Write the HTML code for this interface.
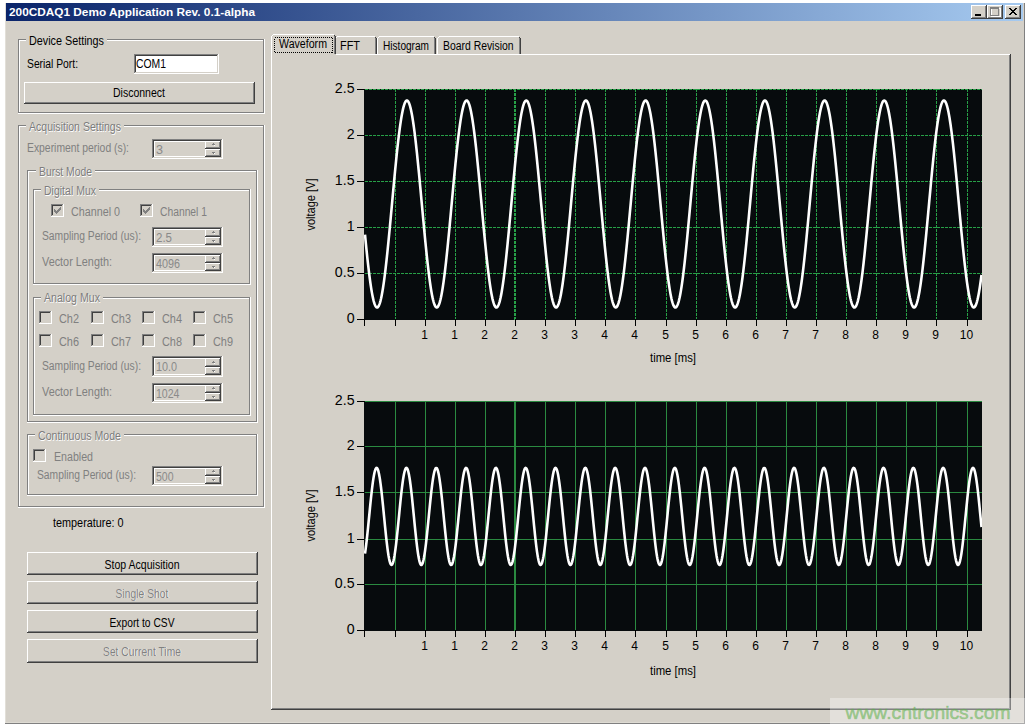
<!DOCTYPE html>
<html><head><meta charset="utf-8"><style>
html,body{margin:0;padding:0;background:#fff;width:1030px;height:728px;overflow:hidden}
svg{display:block}
text{font-family:"Liberation Sans",sans-serif}
</style></head><body>
<svg width="1030" height="728" viewBox="0 0 1030 728" shape-rendering="crispEdges">
<rect x="0" y="0" width="1030" height="728" fill="#fff"/>
<rect x="5" y="3" width="1020" height="721" fill="#d4d0c8"/>
<rect x="5" y="3" width="1" height="720" fill="#e2dfd8"/>
<rect x="6" y="722" width="1018" height="1" fill="#dedbd3"/>
<rect x="1024" y="3" width="1" height="721" fill="#808080"/>
<rect x="5" y="723" width="1020" height="1" fill="#808080"/>
<defs><linearGradient id="tg" x1="0" x2="1" y1="0" y2="0"><stop offset="0" stop-color="#0a246a"/><stop offset="1" stop-color="#a6caf0"/></linearGradient></defs>
<rect x="6" y="3" width="1017" height="18" fill="url(#tg)"/>
<text x="9" y="16" font-size="11" fill="#fff" font-weight="bold" text-anchor="start" textLength="246" lengthAdjust="spacingAndGlyphs">200CDAQ1 Demo Application Rev. 0.1-alpha</text>
<rect x="971" y="5" width="16" height="14" fill="#d4d0c8"/>
<rect x="971" y="5" width="15" height="1" fill="#ffffff"/>
<rect x="971" y="5" width="1" height="13" fill="#ffffff"/>
<rect x="971" y="18" width="16" height="1" fill="#404040"/>
<rect x="986" y="5" width="1" height="14" fill="#404040"/>
<rect x="972" y="17" width="14" height="1" fill="#808080"/>
<rect x="985" y="6" width="1" height="12" fill="#808080"/>
<rect x="987" y="5" width="16" height="14" fill="#d4d0c8"/>
<rect x="987" y="5" width="15" height="1" fill="#ffffff"/>
<rect x="987" y="5" width="1" height="13" fill="#ffffff"/>
<rect x="987" y="18" width="16" height="1" fill="#404040"/>
<rect x="1002" y="5" width="1" height="14" fill="#404040"/>
<rect x="988" y="17" width="14" height="1" fill="#808080"/>
<rect x="1001" y="6" width="1" height="12" fill="#808080"/>
<rect x="1005" y="5" width="16" height="14" fill="#d4d0c8"/>
<rect x="1005" y="5" width="15" height="1" fill="#ffffff"/>
<rect x="1005" y="5" width="1" height="13" fill="#ffffff"/>
<rect x="1005" y="18" width="16" height="1" fill="#404040"/>
<rect x="1020" y="5" width="1" height="14" fill="#404040"/>
<rect x="1006" y="17" width="14" height="1" fill="#808080"/>
<rect x="1019" y="6" width="1" height="12" fill="#808080"/>
<rect x="975" y="14" width="6" height="2" fill="#000"/>
<rect x="991.5" y="8.5" width="9" height="8" fill="none" stroke="#fff" stroke-width="1"/>
<rect x="990" y="7" width="9" height="2" fill="#808080"/>
<rect x="990" y="7" width="1" height="9" fill="#808080"/>
<rect x="998" y="7" width="1" height="9" fill="#808080"/>
<rect x="990" y="15" width="9" height="1" fill="#808080"/>
<rect x="1009" y="8" width="1" height="1" fill="#000"/>
<rect x="1010" y="8" width="1" height="1" fill="#000"/>
<rect x="1015" y="8" width="1" height="1" fill="#000"/>
<rect x="1016" y="8" width="1" height="1" fill="#000"/>
<rect x="1010" y="9" width="1" height="1" fill="#000"/>
<rect x="1011" y="9" width="1" height="1" fill="#000"/>
<rect x="1014" y="9" width="1" height="1" fill="#000"/>
<rect x="1015" y="9" width="1" height="1" fill="#000"/>
<rect x="1011" y="10" width="1" height="1" fill="#000"/>
<rect x="1012" y="10" width="1" height="1" fill="#000"/>
<rect x="1013" y="10" width="1" height="1" fill="#000"/>
<rect x="1014" y="10" width="1" height="1" fill="#000"/>
<rect x="1012" y="11" width="1" height="1" fill="#000"/>
<rect x="1013" y="11" width="1" height="1" fill="#000"/>
<rect x="1011" y="12" width="1" height="1" fill="#000"/>
<rect x="1012" y="12" width="1" height="1" fill="#000"/>
<rect x="1013" y="12" width="1" height="1" fill="#000"/>
<rect x="1014" y="12" width="1" height="1" fill="#000"/>
<rect x="1010" y="13" width="1" height="1" fill="#000"/>
<rect x="1011" y="13" width="1" height="1" fill="#000"/>
<rect x="1014" y="13" width="1" height="1" fill="#000"/>
<rect x="1015" y="13" width="1" height="1" fill="#000"/>
<rect x="1009" y="14" width="1" height="1" fill="#000"/>
<rect x="1010" y="14" width="1" height="1" fill="#000"/>
<rect x="1015" y="14" width="1" height="1" fill="#000"/>
<rect x="1016" y="14" width="1" height="1" fill="#000"/>
<rect x="18" y="39" width="246" height="1" fill="#808080"/>
<rect x="18" y="39" width="1" height="74" fill="#808080"/>
<rect x="263" y="39" width="1" height="74" fill="#808080"/>
<rect x="18" y="112" width="246" height="1" fill="#808080"/>
<rect x="19" y="40" width="244" height="1" fill="#ffffff"/>
<rect x="19" y="40" width="1" height="72" fill="#ffffff"/>
<rect x="264" y="39" width="1" height="75" fill="#ffffff"/>
<rect x="18" y="113" width="247" height="1" fill="#ffffff"/>
<rect x="26" y="38" width="81" height="4" fill="#d4d0c8"/>
<text x="29" y="45" font-size="12" fill="#000" font-weight="normal" text-anchor="start" textLength="75" lengthAdjust="spacingAndGlyphs">Device Settings</text>
<text x="27" y="68" font-size="12" fill="#000" font-weight="normal" text-anchor="start" textLength="51" lengthAdjust="spacingAndGlyphs">Serial Port:</text>
<rect x="134" y="54" width="85" height="20" fill="#fff"/>
<rect x="134" y="54" width="84" height="1" fill="#808080"/>
<rect x="134" y="54" width="1" height="19" fill="#808080"/>
<rect x="134" y="73" width="85" height="1" fill="#ffffff"/>
<rect x="218" y="54" width="1" height="20" fill="#ffffff"/>
<rect x="135" y="55" width="82" height="1" fill="#404040"/>
<rect x="135" y="55" width="1" height="17" fill="#404040"/>
<rect x="135" y="72" width="83" height="1" fill="#d4d0c8"/>
<rect x="217" y="55" width="1" height="18" fill="#d4d0c8"/>
<text x="136" y="68" font-size="12" fill="#000" font-weight="normal" text-anchor="start" textLength="30" lengthAdjust="spacingAndGlyphs">COM1</text>
<rect x="24" y="82" width="231" height="22" fill="#d4d0c8"/>
<rect x="24" y="82" width="230" height="1" fill="#ffffff"/>
<rect x="24" y="82" width="1" height="21" fill="#ffffff"/>
<rect x="24" y="103" width="231" height="1" fill="#404040"/>
<rect x="254" y="82" width="1" height="22" fill="#404040"/>
<rect x="25" y="102" width="229" height="1" fill="#808080"/>
<rect x="253" y="83" width="1" height="20" fill="#808080"/>
<text x="113" y="97" font-size="12" fill="#000" font-weight="normal" text-anchor="start" textLength="52" lengthAdjust="spacingAndGlyphs">Disconnect</text>
<rect x="18" y="125" width="246" height="1" fill="#808080"/>
<rect x="18" y="125" width="1" height="382" fill="#808080"/>
<rect x="263" y="125" width="1" height="382" fill="#808080"/>
<rect x="18" y="506" width="246" height="1" fill="#808080"/>
<rect x="19" y="126" width="244" height="1" fill="#ffffff"/>
<rect x="19" y="126" width="1" height="380" fill="#ffffff"/>
<rect x="264" y="125" width="1" height="383" fill="#ffffff"/>
<rect x="18" y="507" width="247" height="1" fill="#ffffff"/>
<rect x="26" y="124" width="98" height="4" fill="#d4d0c8"/>
<text x="29.6" y="131.6" font-size="12" fill="#fff" font-weight="normal" text-anchor="start" textLength="92" lengthAdjust="spacingAndGlyphs">Acquisition Settings</text>
<text x="29" y="131" font-size="12" fill="#7c7c7c" font-weight="normal" text-anchor="start" textLength="92" lengthAdjust="spacingAndGlyphs">Acquisition Settings</text>
<text x="27" y="152" font-size="12" fill="#808080" font-weight="normal" text-anchor="start" textLength="102" lengthAdjust="spacingAndGlyphs">Experiment period (s):</text>
<rect x="152" y="139" width="71" height="20" fill="#d4d0c8"/>
<rect x="152" y="139" width="70" height="1" fill="#808080"/>
<rect x="152" y="139" width="1" height="19" fill="#808080"/>
<rect x="152" y="158" width="71" height="1" fill="#ffffff"/>
<rect x="222" y="139" width="1" height="20" fill="#ffffff"/>
<rect x="153" y="140" width="68" height="1" fill="#404040"/>
<rect x="153" y="140" width="1" height="17" fill="#404040"/>
<rect x="153" y="157" width="69" height="1" fill="#d4d0c8"/>
<rect x="221" y="140" width="1" height="18" fill="#d4d0c8"/>
<rect x="154" y="141" width="67" height="16" fill="#ffffff"/>
<rect x="155" y="142" width="66" height="14" fill="#d4d0c8"/>
<rect x="205" y="141" width="16" height="8" fill="#d4d0c8"/>
<rect x="205" y="141" width="15" height="1" fill="#ffffff"/>
<rect x="205" y="141" width="1" height="7" fill="#ffffff"/>
<rect x="205" y="148" width="16" height="1" fill="#404040"/>
<rect x="220" y="141" width="1" height="8" fill="#404040"/>
<rect x="206" y="147" width="14" height="1" fill="#808080"/>
<rect x="219" y="142" width="1" height="6" fill="#808080"/>
<rect x="205" y="149" width="16" height="8" fill="#d4d0c8"/>
<rect x="205" y="149" width="15" height="1" fill="#ffffff"/>
<rect x="205" y="149" width="1" height="7" fill="#ffffff"/>
<rect x="205" y="156" width="16" height="1" fill="#404040"/>
<rect x="220" y="149" width="1" height="8" fill="#404040"/>
<rect x="206" y="155" width="14" height="1" fill="#808080"/>
<rect x="219" y="150" width="1" height="6" fill="#808080"/>
<rect x="213" y="143" width="1" height="1" fill="#808080"/>
<rect x="212" y="144" width="3" height="1" fill="#808080"/>
<rect x="214" y="145" width="1" height="1" fill="#ffffff"/>
<rect x="212" y="152" width="3" height="1" fill="#808080"/>
<rect x="213" y="153" width="1" height="1" fill="#808080"/>
<rect x="214" y="153" width="1" height="1" fill="#ffffff"/>
<text x="156" y="154" font-size="12" fill="#8a8a8a" font-weight="normal" text-anchor="start" textLength="7" lengthAdjust="spacingAndGlyphs">3</text>
<rect x="27" y="170" width="230" height="1" fill="#808080"/>
<rect x="27" y="170" width="1" height="252" fill="#808080"/>
<rect x="256" y="170" width="1" height="252" fill="#808080"/>
<rect x="27" y="421" width="230" height="1" fill="#808080"/>
<rect x="28" y="171" width="228" height="1" fill="#ffffff"/>
<rect x="28" y="171" width="1" height="250" fill="#ffffff"/>
<rect x="257" y="170" width="1" height="253" fill="#ffffff"/>
<rect x="27" y="422" width="231" height="1" fill="#ffffff"/>
<rect x="36" y="169" width="59" height="4" fill="#d4d0c8"/>
<text x="39.6" y="176.6" font-size="12" fill="#fff" font-weight="normal" text-anchor="start" textLength="53" lengthAdjust="spacingAndGlyphs">Burst Mode</text>
<text x="39" y="176" font-size="12" fill="#7c7c7c" font-weight="normal" text-anchor="start" textLength="53" lengthAdjust="spacingAndGlyphs">Burst Mode</text>
<rect x="33" y="189" width="217" height="1" fill="#808080"/>
<rect x="33" y="189" width="1" height="95" fill="#808080"/>
<rect x="249" y="189" width="1" height="95" fill="#808080"/>
<rect x="33" y="283" width="217" height="1" fill="#808080"/>
<rect x="34" y="190" width="215" height="1" fill="#ffffff"/>
<rect x="34" y="190" width="1" height="93" fill="#ffffff"/>
<rect x="250" y="189" width="1" height="96" fill="#ffffff"/>
<rect x="33" y="284" width="218" height="1" fill="#ffffff"/>
<rect x="41" y="188" width="58" height="4" fill="#d4d0c8"/>
<text x="44.6" y="195.6" font-size="12" fill="#fff" font-weight="normal" text-anchor="start" textLength="52" lengthAdjust="spacingAndGlyphs">Digital Mux</text>
<text x="44" y="195" font-size="12" fill="#7c7c7c" font-weight="normal" text-anchor="start" textLength="52" lengthAdjust="spacingAndGlyphs">Digital Mux</text>
<rect x="51" y="204" width="13" height="13" fill="#d4d0c8"/>
<rect x="51" y="204" width="12" height="1" fill="#808080"/>
<rect x="51" y="204" width="1" height="12" fill="#808080"/>
<rect x="51" y="216" width="13" height="1" fill="#ffffff"/>
<rect x="63" y="204" width="1" height="13" fill="#ffffff"/>
<rect x="52" y="205" width="10" height="1" fill="#404040"/>
<rect x="52" y="205" width="1" height="10" fill="#404040"/>
<rect x="52" y="215" width="11" height="1" fill="#d4d0c8"/>
<rect x="62" y="205" width="1" height="11" fill="#d4d0c8"/>
<rect x="54" y="209" width="1" height="3" fill="#808080"/>
<rect x="55" y="210" width="1" height="3" fill="#808080"/>
<rect x="56" y="211" width="1" height="3" fill="#808080"/>
<rect x="57" y="210" width="1" height="3" fill="#808080"/>
<rect x="58" y="209" width="1" height="3" fill="#808080"/>
<rect x="59" y="208" width="1" height="3" fill="#808080"/>
<rect x="60" y="207" width="1" height="3" fill="#808080"/>
<text x="71" y="216" font-size="12" fill="#808080" font-weight="normal" text-anchor="start" textLength="49" lengthAdjust="spacingAndGlyphs">Channel 0</text>
<rect x="140" y="204" width="13" height="13" fill="#d4d0c8"/>
<rect x="140" y="204" width="12" height="1" fill="#808080"/>
<rect x="140" y="204" width="1" height="12" fill="#808080"/>
<rect x="140" y="216" width="13" height="1" fill="#ffffff"/>
<rect x="152" y="204" width="1" height="13" fill="#ffffff"/>
<rect x="141" y="205" width="10" height="1" fill="#404040"/>
<rect x="141" y="205" width="1" height="10" fill="#404040"/>
<rect x="141" y="215" width="11" height="1" fill="#d4d0c8"/>
<rect x="151" y="205" width="1" height="11" fill="#d4d0c8"/>
<rect x="143" y="209" width="1" height="3" fill="#808080"/>
<rect x="144" y="210" width="1" height="3" fill="#808080"/>
<rect x="145" y="211" width="1" height="3" fill="#808080"/>
<rect x="146" y="210" width="1" height="3" fill="#808080"/>
<rect x="147" y="209" width="1" height="3" fill="#808080"/>
<rect x="148" y="208" width="1" height="3" fill="#808080"/>
<rect x="149" y="207" width="1" height="3" fill="#808080"/>
<text x="160" y="216" font-size="12" fill="#808080" font-weight="normal" text-anchor="start" textLength="47" lengthAdjust="spacingAndGlyphs">Channel 1</text>
<text x="42" y="240" font-size="12" fill="#808080" font-weight="normal" text-anchor="start" textLength="99" lengthAdjust="spacingAndGlyphs">Sampling Period (us):</text>
<rect x="152" y="227" width="71" height="20" fill="#d4d0c8"/>
<rect x="152" y="227" width="70" height="1" fill="#808080"/>
<rect x="152" y="227" width="1" height="19" fill="#808080"/>
<rect x="152" y="246" width="71" height="1" fill="#ffffff"/>
<rect x="222" y="227" width="1" height="20" fill="#ffffff"/>
<rect x="153" y="228" width="68" height="1" fill="#404040"/>
<rect x="153" y="228" width="1" height="17" fill="#404040"/>
<rect x="153" y="245" width="69" height="1" fill="#d4d0c8"/>
<rect x="221" y="228" width="1" height="18" fill="#d4d0c8"/>
<rect x="154" y="229" width="67" height="16" fill="#ffffff"/>
<rect x="155" y="230" width="66" height="14" fill="#d4d0c8"/>
<rect x="205" y="229" width="16" height="8" fill="#d4d0c8"/>
<rect x="205" y="229" width="15" height="1" fill="#ffffff"/>
<rect x="205" y="229" width="1" height="7" fill="#ffffff"/>
<rect x="205" y="236" width="16" height="1" fill="#404040"/>
<rect x="220" y="229" width="1" height="8" fill="#404040"/>
<rect x="206" y="235" width="14" height="1" fill="#808080"/>
<rect x="219" y="230" width="1" height="6" fill="#808080"/>
<rect x="205" y="237" width="16" height="8" fill="#d4d0c8"/>
<rect x="205" y="237" width="15" height="1" fill="#ffffff"/>
<rect x="205" y="237" width="1" height="7" fill="#ffffff"/>
<rect x="205" y="244" width="16" height="1" fill="#404040"/>
<rect x="220" y="237" width="1" height="8" fill="#404040"/>
<rect x="206" y="243" width="14" height="1" fill="#808080"/>
<rect x="219" y="238" width="1" height="6" fill="#808080"/>
<rect x="213" y="231" width="1" height="1" fill="#808080"/>
<rect x="212" y="232" width="3" height="1" fill="#808080"/>
<rect x="214" y="233" width="1" height="1" fill="#ffffff"/>
<rect x="212" y="240" width="3" height="1" fill="#808080"/>
<rect x="213" y="241" width="1" height="1" fill="#808080"/>
<rect x="214" y="241" width="1" height="1" fill="#ffffff"/>
<text x="156" y="242" font-size="12" fill="#8a8a8a" font-weight="normal" text-anchor="start" textLength="16" lengthAdjust="spacingAndGlyphs">2.5</text>
<text x="42" y="266" font-size="12" fill="#808080" font-weight="normal" text-anchor="start" textLength="70" lengthAdjust="spacingAndGlyphs">Vector Length:</text>
<rect x="152" y="253" width="71" height="20" fill="#d4d0c8"/>
<rect x="152" y="253" width="70" height="1" fill="#808080"/>
<rect x="152" y="253" width="1" height="19" fill="#808080"/>
<rect x="152" y="272" width="71" height="1" fill="#ffffff"/>
<rect x="222" y="253" width="1" height="20" fill="#ffffff"/>
<rect x="153" y="254" width="68" height="1" fill="#404040"/>
<rect x="153" y="254" width="1" height="17" fill="#404040"/>
<rect x="153" y="271" width="69" height="1" fill="#d4d0c8"/>
<rect x="221" y="254" width="1" height="18" fill="#d4d0c8"/>
<rect x="154" y="255" width="67" height="16" fill="#ffffff"/>
<rect x="155" y="256" width="66" height="14" fill="#d4d0c8"/>
<rect x="205" y="255" width="16" height="8" fill="#d4d0c8"/>
<rect x="205" y="255" width="15" height="1" fill="#ffffff"/>
<rect x="205" y="255" width="1" height="7" fill="#ffffff"/>
<rect x="205" y="262" width="16" height="1" fill="#404040"/>
<rect x="220" y="255" width="1" height="8" fill="#404040"/>
<rect x="206" y="261" width="14" height="1" fill="#808080"/>
<rect x="219" y="256" width="1" height="6" fill="#808080"/>
<rect x="205" y="263" width="16" height="8" fill="#d4d0c8"/>
<rect x="205" y="263" width="15" height="1" fill="#ffffff"/>
<rect x="205" y="263" width="1" height="7" fill="#ffffff"/>
<rect x="205" y="270" width="16" height="1" fill="#404040"/>
<rect x="220" y="263" width="1" height="8" fill="#404040"/>
<rect x="206" y="269" width="14" height="1" fill="#808080"/>
<rect x="219" y="264" width="1" height="6" fill="#808080"/>
<rect x="213" y="257" width="1" height="1" fill="#808080"/>
<rect x="212" y="258" width="3" height="1" fill="#808080"/>
<rect x="214" y="259" width="1" height="1" fill="#ffffff"/>
<rect x="212" y="266" width="3" height="1" fill="#808080"/>
<rect x="213" y="267" width="1" height="1" fill="#808080"/>
<rect x="214" y="267" width="1" height="1" fill="#ffffff"/>
<text x="156" y="268" font-size="12" fill="#8a8a8a" font-weight="normal" text-anchor="start" textLength="24" lengthAdjust="spacingAndGlyphs">4096</text>
<rect x="33" y="297" width="217" height="1" fill="#808080"/>
<rect x="33" y="297" width="1" height="118" fill="#808080"/>
<rect x="249" y="297" width="1" height="118" fill="#808080"/>
<rect x="33" y="414" width="217" height="1" fill="#808080"/>
<rect x="34" y="298" width="215" height="1" fill="#ffffff"/>
<rect x="34" y="298" width="1" height="116" fill="#ffffff"/>
<rect x="250" y="297" width="1" height="119" fill="#ffffff"/>
<rect x="33" y="415" width="218" height="1" fill="#ffffff"/>
<rect x="41" y="296" width="62" height="4" fill="#d4d0c8"/>
<text x="44.6" y="302.6" font-size="12" fill="#fff" font-weight="normal" text-anchor="start" textLength="56" lengthAdjust="spacingAndGlyphs">Analog Mux</text>
<text x="44" y="302" font-size="12" fill="#7c7c7c" font-weight="normal" text-anchor="start" textLength="56" lengthAdjust="spacingAndGlyphs">Analog Mux</text>
<rect x="39" y="311" width="13" height="13" fill="#d4d0c8"/>
<rect x="39" y="311" width="12" height="1" fill="#808080"/>
<rect x="39" y="311" width="1" height="12" fill="#808080"/>
<rect x="39" y="323" width="13" height="1" fill="#ffffff"/>
<rect x="51" y="311" width="1" height="13" fill="#ffffff"/>
<rect x="40" y="312" width="10" height="1" fill="#404040"/>
<rect x="40" y="312" width="1" height="10" fill="#404040"/>
<rect x="40" y="322" width="11" height="1" fill="#d4d0c8"/>
<rect x="50" y="312" width="1" height="11" fill="#d4d0c8"/>
<text x="59" y="323" font-size="12" fill="#808080" font-weight="normal" text-anchor="start" textLength="20" lengthAdjust="spacingAndGlyphs">Ch2</text>
<rect x="91" y="311" width="13" height="13" fill="#d4d0c8"/>
<rect x="91" y="311" width="12" height="1" fill="#808080"/>
<rect x="91" y="311" width="1" height="12" fill="#808080"/>
<rect x="91" y="323" width="13" height="1" fill="#ffffff"/>
<rect x="103" y="311" width="1" height="13" fill="#ffffff"/>
<rect x="92" y="312" width="10" height="1" fill="#404040"/>
<rect x="92" y="312" width="1" height="10" fill="#404040"/>
<rect x="92" y="322" width="11" height="1" fill="#d4d0c8"/>
<rect x="102" y="312" width="1" height="11" fill="#d4d0c8"/>
<text x="111" y="323" font-size="12" fill="#808080" font-weight="normal" text-anchor="start" textLength="20" lengthAdjust="spacingAndGlyphs">Ch3</text>
<rect x="142" y="311" width="13" height="13" fill="#d4d0c8"/>
<rect x="142" y="311" width="12" height="1" fill="#808080"/>
<rect x="142" y="311" width="1" height="12" fill="#808080"/>
<rect x="142" y="323" width="13" height="1" fill="#ffffff"/>
<rect x="154" y="311" width="1" height="13" fill="#ffffff"/>
<rect x="143" y="312" width="10" height="1" fill="#404040"/>
<rect x="143" y="312" width="1" height="10" fill="#404040"/>
<rect x="143" y="322" width="11" height="1" fill="#d4d0c8"/>
<rect x="153" y="312" width="1" height="11" fill="#d4d0c8"/>
<text x="162" y="323" font-size="12" fill="#808080" font-weight="normal" text-anchor="start" textLength="20" lengthAdjust="spacingAndGlyphs">Ch4</text>
<rect x="193" y="311" width="13" height="13" fill="#d4d0c8"/>
<rect x="193" y="311" width="12" height="1" fill="#808080"/>
<rect x="193" y="311" width="1" height="12" fill="#808080"/>
<rect x="193" y="323" width="13" height="1" fill="#ffffff"/>
<rect x="205" y="311" width="1" height="13" fill="#ffffff"/>
<rect x="194" y="312" width="10" height="1" fill="#404040"/>
<rect x="194" y="312" width="1" height="10" fill="#404040"/>
<rect x="194" y="322" width="11" height="1" fill="#d4d0c8"/>
<rect x="204" y="312" width="1" height="11" fill="#d4d0c8"/>
<text x="213" y="323" font-size="12" fill="#808080" font-weight="normal" text-anchor="start" textLength="20" lengthAdjust="spacingAndGlyphs">Ch5</text>
<rect x="39" y="334" width="13" height="13" fill="#d4d0c8"/>
<rect x="39" y="334" width="12" height="1" fill="#808080"/>
<rect x="39" y="334" width="1" height="12" fill="#808080"/>
<rect x="39" y="346" width="13" height="1" fill="#ffffff"/>
<rect x="51" y="334" width="1" height="13" fill="#ffffff"/>
<rect x="40" y="335" width="10" height="1" fill="#404040"/>
<rect x="40" y="335" width="1" height="10" fill="#404040"/>
<rect x="40" y="345" width="11" height="1" fill="#d4d0c8"/>
<rect x="50" y="335" width="1" height="11" fill="#d4d0c8"/>
<text x="59" y="346" font-size="12" fill="#808080" font-weight="normal" text-anchor="start" textLength="20" lengthAdjust="spacingAndGlyphs">Ch6</text>
<rect x="91" y="334" width="13" height="13" fill="#d4d0c8"/>
<rect x="91" y="334" width="12" height="1" fill="#808080"/>
<rect x="91" y="334" width="1" height="12" fill="#808080"/>
<rect x="91" y="346" width="13" height="1" fill="#ffffff"/>
<rect x="103" y="334" width="1" height="13" fill="#ffffff"/>
<rect x="92" y="335" width="10" height="1" fill="#404040"/>
<rect x="92" y="335" width="1" height="10" fill="#404040"/>
<rect x="92" y="345" width="11" height="1" fill="#d4d0c8"/>
<rect x="102" y="335" width="1" height="11" fill="#d4d0c8"/>
<text x="111" y="346" font-size="12" fill="#808080" font-weight="normal" text-anchor="start" textLength="20" lengthAdjust="spacingAndGlyphs">Ch7</text>
<rect x="142" y="334" width="13" height="13" fill="#d4d0c8"/>
<rect x="142" y="334" width="12" height="1" fill="#808080"/>
<rect x="142" y="334" width="1" height="12" fill="#808080"/>
<rect x="142" y="346" width="13" height="1" fill="#ffffff"/>
<rect x="154" y="334" width="1" height="13" fill="#ffffff"/>
<rect x="143" y="335" width="10" height="1" fill="#404040"/>
<rect x="143" y="335" width="1" height="10" fill="#404040"/>
<rect x="143" y="345" width="11" height="1" fill="#d4d0c8"/>
<rect x="153" y="335" width="1" height="11" fill="#d4d0c8"/>
<text x="162" y="346" font-size="12" fill="#808080" font-weight="normal" text-anchor="start" textLength="20" lengthAdjust="spacingAndGlyphs">Ch8</text>
<rect x="193" y="334" width="13" height="13" fill="#d4d0c8"/>
<rect x="193" y="334" width="12" height="1" fill="#808080"/>
<rect x="193" y="334" width="1" height="12" fill="#808080"/>
<rect x="193" y="346" width="13" height="1" fill="#ffffff"/>
<rect x="205" y="334" width="1" height="13" fill="#ffffff"/>
<rect x="194" y="335" width="10" height="1" fill="#404040"/>
<rect x="194" y="335" width="1" height="10" fill="#404040"/>
<rect x="194" y="345" width="11" height="1" fill="#d4d0c8"/>
<rect x="204" y="335" width="1" height="11" fill="#d4d0c8"/>
<text x="213" y="346" font-size="12" fill="#808080" font-weight="normal" text-anchor="start" textLength="20" lengthAdjust="spacingAndGlyphs">Ch9</text>
<text x="42" y="370" font-size="12" fill="#808080" font-weight="normal" text-anchor="start" textLength="99" lengthAdjust="spacingAndGlyphs">Sampling Period (us):</text>
<rect x="152" y="356" width="71" height="21" fill="#d4d0c8"/>
<rect x="152" y="356" width="70" height="1" fill="#808080"/>
<rect x="152" y="356" width="1" height="20" fill="#808080"/>
<rect x="152" y="376" width="71" height="1" fill="#ffffff"/>
<rect x="222" y="356" width="1" height="21" fill="#ffffff"/>
<rect x="153" y="357" width="68" height="1" fill="#404040"/>
<rect x="153" y="357" width="1" height="18" fill="#404040"/>
<rect x="153" y="375" width="69" height="1" fill="#d4d0c8"/>
<rect x="221" y="357" width="1" height="19" fill="#d4d0c8"/>
<rect x="154" y="358" width="67" height="17" fill="#ffffff"/>
<rect x="155" y="359" width="66" height="15" fill="#d4d0c8"/>
<rect x="205" y="358" width="16" height="9" fill="#d4d0c8"/>
<rect x="205" y="358" width="15" height="1" fill="#ffffff"/>
<rect x="205" y="358" width="1" height="8" fill="#ffffff"/>
<rect x="205" y="366" width="16" height="1" fill="#404040"/>
<rect x="220" y="358" width="1" height="9" fill="#404040"/>
<rect x="206" y="365" width="14" height="1" fill="#808080"/>
<rect x="219" y="359" width="1" height="7" fill="#808080"/>
<rect x="205" y="367" width="16" height="8" fill="#d4d0c8"/>
<rect x="205" y="367" width="15" height="1" fill="#ffffff"/>
<rect x="205" y="367" width="1" height="7" fill="#ffffff"/>
<rect x="205" y="374" width="16" height="1" fill="#404040"/>
<rect x="220" y="367" width="1" height="8" fill="#404040"/>
<rect x="206" y="373" width="14" height="1" fill="#808080"/>
<rect x="219" y="368" width="1" height="6" fill="#808080"/>
<rect x="213" y="361" width="1" height="1" fill="#808080"/>
<rect x="212" y="362" width="3" height="1" fill="#808080"/>
<rect x="214" y="363" width="1" height="1" fill="#ffffff"/>
<rect x="212" y="370" width="3" height="1" fill="#808080"/>
<rect x="213" y="371" width="1" height="1" fill="#808080"/>
<rect x="214" y="371" width="1" height="1" fill="#ffffff"/>
<text x="156" y="371" font-size="12" fill="#8a8a8a" font-weight="normal" text-anchor="start" textLength="21" lengthAdjust="spacingAndGlyphs">10.0</text>
<text x="42" y="396" font-size="12" fill="#808080" font-weight="normal" text-anchor="start" textLength="70" lengthAdjust="spacingAndGlyphs">Vector Length:</text>
<rect x="152" y="383" width="71" height="20" fill="#d4d0c8"/>
<rect x="152" y="383" width="70" height="1" fill="#808080"/>
<rect x="152" y="383" width="1" height="19" fill="#808080"/>
<rect x="152" y="402" width="71" height="1" fill="#ffffff"/>
<rect x="222" y="383" width="1" height="20" fill="#ffffff"/>
<rect x="153" y="384" width="68" height="1" fill="#404040"/>
<rect x="153" y="384" width="1" height="17" fill="#404040"/>
<rect x="153" y="401" width="69" height="1" fill="#d4d0c8"/>
<rect x="221" y="384" width="1" height="18" fill="#d4d0c8"/>
<rect x="154" y="385" width="67" height="16" fill="#ffffff"/>
<rect x="155" y="386" width="66" height="14" fill="#d4d0c8"/>
<rect x="205" y="385" width="16" height="8" fill="#d4d0c8"/>
<rect x="205" y="385" width="15" height="1" fill="#ffffff"/>
<rect x="205" y="385" width="1" height="7" fill="#ffffff"/>
<rect x="205" y="392" width="16" height="1" fill="#404040"/>
<rect x="220" y="385" width="1" height="8" fill="#404040"/>
<rect x="206" y="391" width="14" height="1" fill="#808080"/>
<rect x="219" y="386" width="1" height="6" fill="#808080"/>
<rect x="205" y="393" width="16" height="8" fill="#d4d0c8"/>
<rect x="205" y="393" width="15" height="1" fill="#ffffff"/>
<rect x="205" y="393" width="1" height="7" fill="#ffffff"/>
<rect x="205" y="400" width="16" height="1" fill="#404040"/>
<rect x="220" y="393" width="1" height="8" fill="#404040"/>
<rect x="206" y="399" width="14" height="1" fill="#808080"/>
<rect x="219" y="394" width="1" height="6" fill="#808080"/>
<rect x="213" y="387" width="1" height="1" fill="#808080"/>
<rect x="212" y="388" width="3" height="1" fill="#808080"/>
<rect x="214" y="389" width="1" height="1" fill="#ffffff"/>
<rect x="212" y="396" width="3" height="1" fill="#808080"/>
<rect x="213" y="397" width="1" height="1" fill="#808080"/>
<rect x="214" y="397" width="1" height="1" fill="#ffffff"/>
<text x="156" y="398" font-size="12" fill="#8a8a8a" font-weight="normal" text-anchor="start" textLength="23.5" lengthAdjust="spacingAndGlyphs">1024</text>
<rect x="27" y="434" width="230" height="1" fill="#808080"/>
<rect x="27" y="434" width="1" height="61" fill="#808080"/>
<rect x="256" y="434" width="1" height="61" fill="#808080"/>
<rect x="27" y="494" width="230" height="1" fill="#808080"/>
<rect x="28" y="435" width="228" height="1" fill="#ffffff"/>
<rect x="28" y="435" width="1" height="59" fill="#ffffff"/>
<rect x="257" y="434" width="1" height="62" fill="#ffffff"/>
<rect x="27" y="495" width="231" height="1" fill="#ffffff"/>
<rect x="35" y="433" width="89" height="4" fill="#d4d0c8"/>
<text x="38.6" y="440.6" font-size="12" fill="#fff" font-weight="normal" text-anchor="start" textLength="83" lengthAdjust="spacingAndGlyphs">Continuous Mode</text>
<text x="38" y="440" font-size="12" fill="#7c7c7c" font-weight="normal" text-anchor="start" textLength="83" lengthAdjust="spacingAndGlyphs">Continuous Mode</text>
<rect x="33" y="449" width="13" height="13" fill="#d4d0c8"/>
<rect x="33" y="449" width="12" height="1" fill="#808080"/>
<rect x="33" y="449" width="1" height="12" fill="#808080"/>
<rect x="33" y="461" width="13" height="1" fill="#ffffff"/>
<rect x="45" y="449" width="1" height="13" fill="#ffffff"/>
<rect x="34" y="450" width="10" height="1" fill="#404040"/>
<rect x="34" y="450" width="1" height="10" fill="#404040"/>
<rect x="34" y="460" width="11" height="1" fill="#d4d0c8"/>
<rect x="44" y="450" width="1" height="11" fill="#d4d0c8"/>
<text x="54" y="461" font-size="12" fill="#808080" font-weight="normal" text-anchor="start" textLength="39" lengthAdjust="spacingAndGlyphs">Enabled</text>
<text x="37" y="479" font-size="12" fill="#808080" font-weight="normal" text-anchor="start" textLength="99" lengthAdjust="spacingAndGlyphs">Sampling Period (us):</text>
<rect x="152" y="466" width="71" height="20" fill="#d4d0c8"/>
<rect x="152" y="466" width="70" height="1" fill="#808080"/>
<rect x="152" y="466" width="1" height="19" fill="#808080"/>
<rect x="152" y="485" width="71" height="1" fill="#ffffff"/>
<rect x="222" y="466" width="1" height="20" fill="#ffffff"/>
<rect x="153" y="467" width="68" height="1" fill="#404040"/>
<rect x="153" y="467" width="1" height="17" fill="#404040"/>
<rect x="153" y="484" width="69" height="1" fill="#d4d0c8"/>
<rect x="221" y="467" width="1" height="18" fill="#d4d0c8"/>
<rect x="154" y="468" width="67" height="16" fill="#ffffff"/>
<rect x="155" y="469" width="66" height="14" fill="#d4d0c8"/>
<rect x="205" y="468" width="16" height="8" fill="#d4d0c8"/>
<rect x="205" y="468" width="15" height="1" fill="#ffffff"/>
<rect x="205" y="468" width="1" height="7" fill="#ffffff"/>
<rect x="205" y="475" width="16" height="1" fill="#404040"/>
<rect x="220" y="468" width="1" height="8" fill="#404040"/>
<rect x="206" y="474" width="14" height="1" fill="#808080"/>
<rect x="219" y="469" width="1" height="6" fill="#808080"/>
<rect x="205" y="476" width="16" height="8" fill="#d4d0c8"/>
<rect x="205" y="476" width="15" height="1" fill="#ffffff"/>
<rect x="205" y="476" width="1" height="7" fill="#ffffff"/>
<rect x="205" y="483" width="16" height="1" fill="#404040"/>
<rect x="220" y="476" width="1" height="8" fill="#404040"/>
<rect x="206" y="482" width="14" height="1" fill="#808080"/>
<rect x="219" y="477" width="1" height="6" fill="#808080"/>
<rect x="213" y="470" width="1" height="1" fill="#808080"/>
<rect x="212" y="471" width="3" height="1" fill="#808080"/>
<rect x="214" y="472" width="1" height="1" fill="#ffffff"/>
<rect x="212" y="479" width="3" height="1" fill="#808080"/>
<rect x="213" y="480" width="1" height="1" fill="#808080"/>
<rect x="214" y="480" width="1" height="1" fill="#ffffff"/>
<text x="156" y="481" font-size="12" fill="#8a8a8a" font-weight="normal" text-anchor="start" textLength="17.5" lengthAdjust="spacingAndGlyphs">500</text>
<text x="53" y="527" font-size="12" fill="#000" font-weight="normal" text-anchor="start" textLength="70.5" lengthAdjust="spacingAndGlyphs">temperature: 0</text>
<rect x="27" y="552" width="231" height="23" fill="#d4d0c8"/>
<rect x="27" y="552" width="230" height="1" fill="#ffffff"/>
<rect x="27" y="552" width="1" height="22" fill="#ffffff"/>
<rect x="27" y="574" width="231" height="1" fill="#404040"/>
<rect x="257" y="552" width="1" height="23" fill="#404040"/>
<rect x="28" y="573" width="229" height="1" fill="#808080"/>
<rect x="256" y="553" width="1" height="21" fill="#808080"/>
<text x="142" y="568.5" font-size="12" fill="#000" font-weight="normal" text-anchor="middle" textLength="75" lengthAdjust="spacingAndGlyphs">Stop Acquisition</text>
<rect x="27" y="581" width="231" height="23" fill="#d4d0c8"/>
<rect x="27" y="581" width="230" height="1" fill="#ffffff"/>
<rect x="27" y="581" width="1" height="22" fill="#ffffff"/>
<rect x="27" y="603" width="231" height="1" fill="#404040"/>
<rect x="257" y="581" width="1" height="23" fill="#404040"/>
<rect x="28" y="602" width="229" height="1" fill="#808080"/>
<rect x="256" y="582" width="1" height="21" fill="#808080"/>
<text x="142.6" y="598.1" font-size="12" fill="#fff" font-weight="normal" text-anchor="middle" textLength="53" lengthAdjust="spacingAndGlyphs">Single Shot</text>
<text x="142" y="597.5" font-size="12" fill="#808080" font-weight="normal" text-anchor="middle" textLength="53" lengthAdjust="spacingAndGlyphs">Single Shot</text>
<rect x="27" y="610" width="231" height="23" fill="#d4d0c8"/>
<rect x="27" y="610" width="230" height="1" fill="#ffffff"/>
<rect x="27" y="610" width="1" height="22" fill="#ffffff"/>
<rect x="27" y="632" width="231" height="1" fill="#404040"/>
<rect x="257" y="610" width="1" height="23" fill="#404040"/>
<rect x="28" y="631" width="229" height="1" fill="#808080"/>
<rect x="256" y="611" width="1" height="21" fill="#808080"/>
<text x="142" y="626.5" font-size="12" fill="#000" font-weight="normal" text-anchor="middle" textLength="65" lengthAdjust="spacingAndGlyphs">Export to CSV</text>
<rect x="27" y="639" width="231" height="24" fill="#d4d0c8"/>
<rect x="27" y="639" width="230" height="1" fill="#ffffff"/>
<rect x="27" y="639" width="1" height="23" fill="#ffffff"/>
<rect x="27" y="662" width="231" height="1" fill="#404040"/>
<rect x="257" y="639" width="1" height="24" fill="#404040"/>
<rect x="28" y="661" width="229" height="1" fill="#808080"/>
<rect x="256" y="640" width="1" height="22" fill="#808080"/>
<text x="142.6" y="656.1" font-size="12" fill="#fff" font-weight="normal" text-anchor="middle" textLength="78" lengthAdjust="spacingAndGlyphs">Set Current Time</text>
<text x="142" y="655.5" font-size="12" fill="#808080" font-weight="normal" text-anchor="middle" textLength="78" lengthAdjust="spacingAndGlyphs">Set Current Time</text>
<rect x="271" y="54" width="740" height="656" fill="#d4d0c8"/>
<rect x="271" y="54" width="739" height="1" fill="#ffffff"/>
<rect x="271" y="54" width="1" height="655" fill="#ffffff"/>
<rect x="1009" y="55" width="1" height="654" fill="#808080"/>
<rect x="1010" y="54" width="1" height="656" fill="#404040"/>
<rect x="272" y="708" width="738" height="1" fill="#808080"/>
<rect x="271" y="709" width="740" height="1" fill="#404040"/>
<rect x="335" y="38" width="42" height="16" fill="#d4d0c8"/>
<rect x="335" y="38" width="1" height="16" fill="#ffffff"/>
<rect x="336" y="37" width="1" height="1" fill="#ffffff"/>
<rect x="337" y="36" width="38" height="1" fill="#ffffff"/>
<rect x="375" y="37" width="1" height="17" fill="#808080"/>
<rect x="376" y="38" width="1" height="16" fill="#404040"/>
<rect x="375" y="37" width="1" height="1" fill="#404040"/>
<text x="340" y="50" font-size="12" fill="#000" font-weight="normal" text-anchor="start" textLength="20" lengthAdjust="spacingAndGlyphs">FFT</text>
<rect x="377" y="38" width="59" height="16" fill="#d4d0c8"/>
<rect x="377" y="38" width="1" height="16" fill="#ffffff"/>
<rect x="378" y="37" width="1" height="1" fill="#ffffff"/>
<rect x="379" y="36" width="55" height="1" fill="#ffffff"/>
<rect x="434" y="37" width="1" height="17" fill="#808080"/>
<rect x="435" y="38" width="1" height="16" fill="#404040"/>
<rect x="434" y="37" width="1" height="1" fill="#404040"/>
<text x="383" y="50" font-size="12" fill="#000" font-weight="normal" text-anchor="start" textLength="46" lengthAdjust="spacingAndGlyphs">Histogram</text>
<rect x="437" y="38" width="84" height="16" fill="#d4d0c8"/>
<rect x="437" y="38" width="1" height="16" fill="#ffffff"/>
<rect x="438" y="37" width="1" height="1" fill="#ffffff"/>
<rect x="439" y="36" width="80" height="1" fill="#ffffff"/>
<rect x="519" y="37" width="1" height="17" fill="#808080"/>
<rect x="520" y="38" width="1" height="16" fill="#404040"/>
<rect x="519" y="37" width="1" height="1" fill="#404040"/>
<text x="443" y="50" font-size="12" fill="#000" font-weight="normal" text-anchor="start" textLength="70.5" lengthAdjust="spacingAndGlyphs">Board Revision</text>
<rect x="271" y="34" width="65" height="21" fill="#d4d0c8"/>
<rect x="271" y="36" width="1" height="19" fill="#ffffff"/>
<rect x="272" y="35" width="1" height="1" fill="#ffffff"/>
<rect x="273" y="34" width="61" height="1" fill="#ffffff"/>
<rect x="334" y="36" width="1" height="18" fill="#808080"/>
<rect x="335" y="36" width="1" height="18" fill="#404040"/>
<rect x="334" y="35" width="1" height="1" fill="#404040"/>
<text x="279" y="48" font-size="12" fill="#000" font-weight="normal" text-anchor="start" textLength="48" lengthAdjust="spacingAndGlyphs">Waveform</text>
<rect x="274.5" y="37.5" width="58" height="15" fill="none" stroke="#000" stroke-width="1" stroke-dasharray="1,1"/>
<rect x="364" y="89" width="618" height="231" fill="#070b0d"/>
<line x1="365" y1="89.5" x2="982" y2="89.5" stroke="#27a047" stroke-width="1" stroke-dasharray="3,1"/>
<rect x="357" y="89" width="7" height="1" fill="#000"/>
<text x="354.6" y="93.2" font-size="14.2" fill="#000" font-weight="normal" text-anchor="end">2.5</text>
<line x1="365" y1="135.5" x2="982" y2="135.5" stroke="#27a047" stroke-width="1" stroke-dasharray="3,1"/>
<rect x="357" y="135" width="7" height="1" fill="#000"/>
<text x="354.6" y="139.2" font-size="14.2" fill="#000" font-weight="normal" text-anchor="end">2</text>
<line x1="365" y1="181.5" x2="982" y2="181.5" stroke="#27a047" stroke-width="1" stroke-dasharray="3,1"/>
<rect x="357" y="181" width="7" height="1" fill="#000"/>
<text x="354.6" y="185.2" font-size="14.2" fill="#000" font-weight="normal" text-anchor="end">1.5</text>
<line x1="365" y1="227.5" x2="982" y2="227.5" stroke="#27a047" stroke-width="1" stroke-dasharray="3,1"/>
<rect x="357" y="227" width="7" height="1" fill="#000"/>
<text x="354.6" y="231.2" font-size="14.2" fill="#000" font-weight="normal" text-anchor="end">1</text>
<line x1="365" y1="273.5" x2="982" y2="273.5" stroke="#27a047" stroke-width="1" stroke-dasharray="3,1"/>
<rect x="357" y="273" width="7" height="1" fill="#000"/>
<text x="354.6" y="277.2" font-size="14.2" fill="#000" font-weight="normal" text-anchor="end">0.5</text>
<rect x="357" y="319" width="7" height="1" fill="#000"/>
<text x="354.6" y="323.2" font-size="14.2" fill="#000" font-weight="normal" text-anchor="end">0</text>
<rect x="364" y="319" width="1" height="7" fill="#000"/>
<line x1="395.5" y1="89" x2="395.5" y2="320" stroke="#27a047" stroke-width="1" stroke-dasharray="3,1"/>
<rect x="395" y="319" width="1" height="7" fill="#000"/>
<line x1="425.5" y1="89" x2="425.5" y2="320" stroke="#27a047" stroke-width="1" stroke-dasharray="3,1"/>
<rect x="425" y="319" width="1" height="7" fill="#000"/>
<text x="424.5" y="339" font-size="12" fill="#000" font-weight="normal" text-anchor="middle">1</text>
<line x1="455.5" y1="89" x2="455.5" y2="320" stroke="#27a047" stroke-width="1" stroke-dasharray="3,1"/>
<rect x="455" y="319" width="1" height="7" fill="#000"/>
<text x="454.5" y="339" font-size="12" fill="#000" font-weight="normal" text-anchor="middle">1</text>
<line x1="485.5" y1="89" x2="485.5" y2="320" stroke="#27a047" stroke-width="1" stroke-dasharray="3,1"/>
<rect x="485" y="319" width="1" height="7" fill="#000"/>
<text x="484.5" y="339" font-size="12" fill="#000" font-weight="normal" text-anchor="middle">2</text>
<line x1="515.5" y1="89" x2="515.5" y2="320" stroke="#27a047" stroke-width="1" stroke-dasharray="3,1"/>
<line x1="514.5" y1="89" x2="514.5" y2="320" stroke="#27a047" stroke-width="1" stroke-dasharray="3,1"/>
<rect x="515" y="319" width="1" height="7" fill="#000"/>
<text x="514.5" y="339" font-size="12" fill="#000" font-weight="normal" text-anchor="middle">2</text>
<line x1="545.5" y1="89" x2="545.5" y2="320" stroke="#27a047" stroke-width="1" stroke-dasharray="3,1"/>
<rect x="545" y="319" width="1" height="7" fill="#000"/>
<text x="544.5" y="339" font-size="12" fill="#000" font-weight="normal" text-anchor="middle">3</text>
<line x1="575.5" y1="89" x2="575.5" y2="320" stroke="#27a047" stroke-width="1" stroke-dasharray="3,1"/>
<rect x="575" y="319" width="1" height="7" fill="#000"/>
<text x="574.5" y="339" font-size="12" fill="#000" font-weight="normal" text-anchor="middle">3</text>
<line x1="605.5" y1="89" x2="605.5" y2="320" stroke="#27a047" stroke-width="1" stroke-dasharray="3,1"/>
<rect x="605" y="319" width="1" height="7" fill="#000"/>
<text x="604.5" y="339" font-size="12" fill="#000" font-weight="normal" text-anchor="middle">4</text>
<line x1="635.5" y1="89" x2="635.5" y2="320" stroke="#27a047" stroke-width="1" stroke-dasharray="3,1"/>
<rect x="635" y="319" width="1" height="7" fill="#000"/>
<text x="634.5" y="339" font-size="12" fill="#000" font-weight="normal" text-anchor="middle">4</text>
<line x1="666.5" y1="89" x2="666.5" y2="320" stroke="#27a047" stroke-width="1" stroke-dasharray="3,1"/>
<rect x="666" y="319" width="1" height="7" fill="#000"/>
<text x="665.5" y="339" font-size="12" fill="#000" font-weight="normal" text-anchor="middle">5</text>
<line x1="696.5" y1="89" x2="696.5" y2="320" stroke="#27a047" stroke-width="1" stroke-dasharray="3,1"/>
<rect x="696" y="319" width="1" height="7" fill="#000"/>
<text x="695.5" y="339" font-size="12" fill="#000" font-weight="normal" text-anchor="middle">5</text>
<line x1="726.5" y1="89" x2="726.5" y2="320" stroke="#27a047" stroke-width="1" stroke-dasharray="3,1"/>
<rect x="726" y="319" width="1" height="7" fill="#000"/>
<text x="725.5" y="339" font-size="12" fill="#000" font-weight="normal" text-anchor="middle">6</text>
<line x1="756.5" y1="89" x2="756.5" y2="320" stroke="#27a047" stroke-width="1" stroke-dasharray="3,1"/>
<rect x="756" y="319" width="1" height="7" fill="#000"/>
<text x="755.5" y="339" font-size="12" fill="#000" font-weight="normal" text-anchor="middle">6</text>
<line x1="786.5" y1="89" x2="786.5" y2="320" stroke="#27a047" stroke-width="1" stroke-dasharray="3,1"/>
<rect x="786" y="319" width="1" height="7" fill="#000"/>
<text x="785.5" y="339" font-size="12" fill="#000" font-weight="normal" text-anchor="middle">7</text>
<line x1="816.5" y1="89" x2="816.5" y2="320" stroke="#27a047" stroke-width="1" stroke-dasharray="3,1"/>
<rect x="816" y="319" width="1" height="7" fill="#000"/>
<text x="815.5" y="339" font-size="12" fill="#000" font-weight="normal" text-anchor="middle">7</text>
<line x1="846.5" y1="89" x2="846.5" y2="320" stroke="#27a047" stroke-width="1" stroke-dasharray="3,1"/>
<rect x="846" y="319" width="1" height="7" fill="#000"/>
<text x="845.5" y="339" font-size="12" fill="#000" font-weight="normal" text-anchor="middle">8</text>
<line x1="876.5" y1="89" x2="876.5" y2="320" stroke="#27a047" stroke-width="1" stroke-dasharray="3,1"/>
<rect x="876" y="319" width="1" height="7" fill="#000"/>
<text x="875.5" y="339" font-size="12" fill="#000" font-weight="normal" text-anchor="middle">8</text>
<line x1="906.5" y1="89" x2="906.5" y2="320" stroke="#27a047" stroke-width="1" stroke-dasharray="3,1"/>
<rect x="906" y="319" width="1" height="7" fill="#000"/>
<text x="905.5" y="339" font-size="12" fill="#000" font-weight="normal" text-anchor="middle">9</text>
<line x1="936.5" y1="89" x2="936.5" y2="320" stroke="#27a047" stroke-width="1" stroke-dasharray="3,1"/>
<rect x="936" y="319" width="1" height="7" fill="#000"/>
<text x="935.5" y="339" font-size="12" fill="#000" font-weight="normal" text-anchor="middle">9</text>
<line x1="967.5" y1="89" x2="967.5" y2="320" stroke="#27a047" stroke-width="1" stroke-dasharray="3,1"/>
<rect x="967" y="319" width="1" height="7" fill="#000"/>
<text x="966.5" y="339" font-size="12" fill="#000" font-weight="normal" text-anchor="middle">10</text>
<clipPath id="c89"><rect x="364" y="89" width="618" height="231"/></clipPath>
<polyline clip-path="url(#c89)" points="365.00,234.62 365.50,239.78 366.00,244.84 366.50,249.79 367.00,254.61 367.50,259.29 368.00,263.82 368.50,268.18 369.00,272.37 369.50,276.36 370.00,280.16 370.50,283.74 371.00,287.10 371.50,290.23 372.00,293.13 372.50,295.77 373.00,298.16 373.50,300.29 374.00,302.16 374.50,303.75 375.00,305.06 375.50,306.10 376.00,306.85 376.50,307.32 377.00,307.50 377.50,307.39 378.00,307.00 378.50,306.32 379.00,305.36 379.50,304.12 380.00,302.60 380.50,300.80 381.00,298.74 381.50,296.42 382.00,293.84 382.50,291.01 383.00,287.94 383.50,284.63 384.00,281.11 384.50,277.37 385.00,273.42 385.50,269.29 386.00,264.97 386.50,260.49 387.00,255.84 387.50,251.06 388.00,246.14 388.50,241.11 389.00,235.97 389.50,230.75 390.00,225.45 390.50,220.09 391.00,214.69 391.50,209.26 392.00,203.81 392.50,198.36 393.00,192.93 393.50,187.53 394.00,182.18 394.50,176.88 395.00,171.66 395.50,166.54 396.00,161.51 396.50,156.60 397.00,151.83 397.50,147.19 398.00,142.72 398.50,138.42 399.00,134.29 399.50,130.36 400.00,126.64 400.50,123.13 401.00,119.84 401.50,116.79 402.00,113.97 402.50,111.41 403.00,109.11 403.50,107.06 404.00,105.29 404.50,103.79 405.00,102.56 405.50,101.62 406.00,100.96 406.50,100.59 407.00,100.51 407.50,100.71 408.00,101.19 408.50,101.97 409.00,103.02 409.50,104.35 410.00,105.97 410.50,107.85 411.00,110.00 411.50,112.41 412.00,115.07 412.50,117.98 413.00,121.13 413.50,124.50 414.00,128.10 414.50,131.91 415.00,135.92 415.50,140.12 416.00,144.49 416.50,149.03 417.00,153.72 417.50,158.55 418.00,163.51 418.50,168.58 419.00,173.74 419.50,178.99 420.00,184.31 420.50,189.69 421.00,195.10 421.50,200.54 422.00,205.99 422.50,211.43 423.00,216.85 423.50,222.24 424.00,227.58 424.50,232.85 425.00,238.04 425.50,243.14 426.00,248.12 426.50,252.99 427.00,257.72 427.50,262.30 428.00,266.72 428.50,270.97 429.00,275.03 429.50,278.89 430.00,282.55 430.50,285.98 431.00,289.19 431.50,292.17 432.00,294.90 432.50,297.38 433.00,299.60 433.50,301.55 434.00,303.24 434.50,304.65 435.00,305.78 435.50,306.63 436.00,307.19 436.50,307.47 437.00,307.46 437.50,307.16 438.00,306.58 438.50,305.72 439.00,304.57 439.50,303.14 440.00,301.44 440.50,299.47 441.00,297.24 441.50,294.74 442.00,292.00 442.50,289.01 443.00,285.78 443.50,282.33 444.00,278.66 444.50,274.79 445.00,270.72 445.50,266.46 446.00,262.03 446.50,257.44 447.00,252.70 447.50,247.83 448.00,242.83 448.50,237.73 449.00,232.53 449.50,227.26 450.00,221.92 450.50,216.53 451.00,211.11 451.50,205.66 452.00,200.21 452.50,194.78 453.00,189.36 453.50,183.99 454.00,178.68 454.50,173.43 455.00,168.27 455.50,163.21 456.00,158.26 456.50,153.43 457.00,148.75 457.50,144.22 458.00,139.86 458.50,135.67 459.00,131.68 459.50,127.88 460.00,124.30 460.50,120.93 461.00,117.80 461.50,114.90 462.00,112.25 462.50,109.86 463.00,107.73 463.50,105.86 464.00,104.27 464.50,102.95 465.00,101.91 465.50,101.16 466.00,100.69 466.50,100.50 467.00,100.61 467.50,101.00 468.00,101.67 468.50,102.63 469.00,103.87 469.50,105.39 470.00,107.18 470.50,109.24 471.00,111.56 471.50,114.14 472.00,116.96 472.50,120.03 473.00,123.33 473.50,126.86 474.00,130.59 474.50,134.53 475.00,138.67 475.50,142.98 476.00,147.47 476.50,152.11 477.00,156.89 477.50,161.81 478.00,166.84 478.50,171.98 479.00,177.20 479.50,182.50 480.00,187.85 480.50,193.26 481.00,198.69 481.50,204.14 482.00,209.58 482.50,215.01 483.00,220.41 483.50,225.77 484.00,231.06 484.50,236.28 485.00,241.41 485.50,246.44 486.00,251.35 486.50,256.13 487.00,260.76 487.50,265.24 488.00,269.54 488.50,273.67 489.00,277.60 489.50,281.33 490.00,284.84 490.50,288.13 491.00,291.18 491.50,294.00 492.00,296.56 492.50,298.87 493.00,300.92 493.50,302.70 494.00,304.20 494.50,305.42 495.00,306.37 495.50,307.03 496.00,307.41 496.50,307.49 497.00,307.30 497.50,306.81 498.00,306.04 498.50,304.99 499.00,303.66 499.50,302.05 500.00,300.17 500.50,298.03 501.00,295.62 501.50,292.96 502.00,290.05 502.50,286.91 503.00,283.53 503.50,279.93 504.00,276.13 504.50,272.12 505.00,267.93 505.50,263.55 506.00,259.02 506.50,254.33 507.00,249.50 507.50,244.54 508.00,239.48 508.50,234.31 509.00,229.06 509.50,223.74 510.00,218.37 510.50,212.95 511.00,207.51 511.50,202.07 512.00,196.62 512.50,191.20 513.00,185.81 513.50,180.48 514.00,175.20 514.50,170.01 515.00,164.92 515.50,159.93 516.00,155.06 516.50,150.33 517.00,145.74 517.50,141.32 518.00,137.08 518.50,133.01 519.00,129.15 519.50,125.49 520.00,122.05 520.50,118.84 521.00,115.86 521.50,113.13 522.00,110.65 522.50,108.42 523.00,106.47 523.50,104.78 524.00,103.37 524.50,102.23 525.00,101.38 525.50,100.81 526.00,100.53 526.50,100.54 527.00,100.83 527.50,101.41 528.00,102.27 528.50,103.42 529.00,104.84 529.50,106.54 530.00,108.51 530.50,110.74 531.00,113.23 531.50,115.97 532.00,118.96 532.50,122.18 533.00,125.63 533.50,129.30 534.00,133.17 534.50,137.24 535.00,141.50 535.50,145.92 536.00,150.51 536.50,155.25 537.00,160.12 537.50,165.12 538.00,170.22 538.50,175.41 539.00,180.69 539.50,186.03 540.00,191.42 540.50,196.84 541.00,202.28 541.50,207.73 542.00,213.17 542.50,218.58 543.00,223.95 543.50,229.27 544.00,234.52 544.50,239.68 545.00,244.74 545.50,249.69 546.00,254.52 546.50,259.20 547.00,263.73 547.50,268.10 548.00,272.29 548.50,276.28 549.00,280.08 549.50,283.67 550.00,287.04 550.50,290.17 551.00,293.07 551.50,295.72 552.00,298.12 552.50,300.25 553.00,302.12 553.50,303.72 554.00,305.04 554.50,306.08 555.00,306.84 555.50,307.31 556.00,307.50 556.50,307.40 557.00,307.01 557.50,306.34 558.00,305.38 558.50,304.14 559.00,302.63 559.50,300.84 560.00,298.79 560.50,296.47 561.00,293.89 561.50,291.07 562.00,288.00 562.50,284.70 563.00,281.18 563.50,277.45 564.00,273.51 564.50,269.37 565.00,265.06 565.50,260.58 566.00,255.94 566.50,251.16 567.00,246.24 567.50,241.21 568.00,236.08 568.50,230.85 569.00,225.56 569.50,220.20 570.00,214.80 570.50,209.37 571.00,203.92 571.50,198.47 572.00,193.04 572.50,187.64 573.00,182.28 573.50,176.99 574.00,171.77 574.50,166.64 575.00,161.61 575.50,156.70 576.00,151.92 576.50,147.29 577.00,142.81 577.50,138.50 578.00,134.37 578.50,130.44 579.00,126.71 579.50,123.19 580.00,119.90 580.50,116.84 581.00,114.03 581.50,111.46 582.00,109.15 582.50,107.10 583.00,105.32 583.50,103.81 584.00,102.59 584.50,101.64 585.00,100.97 585.50,100.60 586.00,100.50 586.50,100.70 587.00,101.18 587.50,101.95 588.00,103.00 588.50,104.33 589.00,105.93 589.50,107.81 590.00,109.95 590.50,112.36 591.00,115.01 591.50,117.92 592.00,121.06 592.50,124.43 593.00,128.03 593.50,131.83 594.00,135.84 594.50,140.03 595.00,144.40 595.50,148.94 596.00,153.62 596.50,158.45 597.00,163.41 597.50,168.47 598.00,173.64 598.50,178.89 599.00,184.21 599.50,189.58 600.00,194.99 600.50,200.43 601.00,205.88 601.50,211.32 602.00,216.75 602.50,222.13 603.00,227.47 603.50,232.74 604.00,237.94 604.50,243.03 605.00,248.02 605.50,252.89 606.00,257.63 606.50,262.21 607.00,266.63 607.50,270.88 608.00,274.95 608.50,278.81 609.00,282.47 609.50,285.92 610.00,289.13 610.50,292.11 611.00,294.85 611.50,297.33 612.00,299.56 612.50,301.52 613.00,303.21 613.50,304.62 614.00,305.76 614.50,306.61 615.00,307.18 615.50,307.47 616.00,307.46 616.50,307.17 617.00,306.60 617.50,305.74 618.00,304.60 618.50,303.18 619.00,301.48 619.50,299.51 620.00,297.28 620.50,294.80 621.00,292.05 621.50,289.07 622.00,285.85 622.50,282.40 623.00,278.74 623.50,274.87 624.00,270.80 624.50,266.55 625.00,262.12 625.50,257.53 626.00,252.80 626.50,247.93 627.00,242.93 627.50,237.83 628.00,232.64 628.50,227.36 629.00,222.03 629.50,216.64 630.00,211.21 630.50,205.77 631.00,200.32 631.50,194.88 632.00,189.47 632.50,184.10 633.00,178.78 633.50,173.53 634.00,168.37 634.50,163.31 635.00,158.35 635.50,153.53 636.00,148.84 636.50,144.31 637.00,139.94 637.50,135.76 638.00,131.75 638.50,127.95 639.00,124.37 639.50,121.00 640.00,117.86 640.50,114.96 641.00,112.30 641.50,109.91 642.00,107.77 642.50,105.90 643.00,104.30 643.50,102.97 644.00,101.93 644.50,101.17 645.00,100.69 645.50,100.50 646.00,100.60 646.50,100.99 647.00,101.65 647.50,102.61 648.00,103.84 648.50,105.35 649.00,107.14 649.50,109.19 650.00,111.51 650.50,114.08 651.00,116.90 651.50,119.97 652.00,123.26 652.50,126.78 653.00,130.52 653.50,134.45 654.00,138.58 654.50,142.90 655.00,147.38 655.50,152.01 656.00,156.80 656.50,161.71 657.00,166.74 657.50,171.87 658.00,177.09 658.50,182.39 659.00,187.75 659.50,193.15 660.00,198.58 660.50,204.03 661.00,209.47 661.50,214.91 662.00,220.31 662.50,225.66 663.00,230.96 663.50,236.18 664.00,241.31 664.50,246.34 665.00,251.25 665.50,256.03 666.00,260.67 666.50,265.15 667.00,269.46 667.50,273.59 668.00,277.52 668.50,281.25 669.00,284.77 669.50,288.07 670.00,291.13 670.50,293.95 671.00,296.52 671.50,298.83 672.00,300.88 672.50,302.66 673.00,304.17 673.50,305.40 674.00,306.35 674.50,307.02 675.00,307.40 675.50,307.50 676.00,307.30 676.50,306.83 677.00,306.06 677.50,305.02 678.00,303.69 678.50,302.09 679.00,300.21 679.50,298.07 680.00,295.67 680.50,293.01 681.00,290.11 681.50,286.97 682.00,283.60 682.50,280.01 683.00,276.21 683.50,272.20 684.00,268.01 684.50,263.64 685.00,259.11 685.50,254.42 686.00,249.60 686.50,244.64 687.00,239.58 687.50,234.41 688.00,229.17 688.50,223.85 689.00,218.47 689.50,213.06 690.00,207.62 690.50,202.17 691.00,196.73 691.50,191.31 692.00,185.92 692.50,180.58 693.00,175.31 693.50,170.12 694.00,165.02 694.50,160.02 695.00,155.15 695.50,150.42 696.00,145.83 696.50,141.41 697.00,137.16 697.50,133.09 698.00,129.22 698.50,125.56 699.00,122.12 699.50,118.90 700.00,115.92 700.50,113.18 701.00,110.69 701.50,108.46 702.00,106.50 702.50,104.81 703.00,103.39 703.50,102.25 704.00,101.40 704.50,100.82 705.00,100.54 705.50,100.54 706.00,100.82 706.50,101.40 707.00,102.25 707.50,103.39 708.00,104.81 708.50,106.50 709.00,108.46 709.50,110.69 710.00,113.18 710.50,115.92 711.00,118.90 711.50,122.12 712.00,125.56 712.50,129.22 713.00,133.09 713.50,137.16 714.00,141.41 714.50,145.83 715.00,150.42 715.50,155.15 716.00,160.02 716.50,165.02 717.00,170.12 717.50,175.31 718.00,180.58 718.50,185.92 719.00,191.31 719.50,196.73 720.00,202.17 720.50,207.62 721.00,213.06 721.50,218.47 722.00,223.85 722.50,229.17 723.00,234.41 723.50,239.58 724.00,244.64 724.50,249.60 725.00,254.42 725.50,259.11 726.00,263.64 726.50,268.01 727.00,272.20 727.50,276.21 728.00,280.01 728.50,283.60 729.00,286.97 729.50,290.11 730.00,293.01 730.50,295.67 731.00,298.07 731.50,300.21 732.00,302.09 732.50,303.69 733.00,305.02 733.50,306.06 734.00,306.83 734.50,307.30 735.00,307.50 735.50,307.40 736.00,307.02 736.50,306.35 737.00,305.40 737.50,304.17 738.00,302.66 738.50,300.88 739.00,298.83 739.50,296.52 740.00,293.95 740.50,291.13 741.00,288.07 741.50,284.77 742.00,281.25 742.50,277.52 743.00,273.59 743.50,269.46 744.00,265.15 744.50,260.67 745.00,256.03 745.50,251.25 746.00,246.34 746.50,241.31 747.00,236.18 747.50,230.96 748.00,225.66 748.50,220.31 749.00,214.91 749.50,209.47 750.00,204.03 750.50,198.58 751.00,193.15 751.50,187.75 752.00,182.39 752.50,177.09 753.00,171.87 753.50,166.74 754.00,161.71 754.50,156.80 755.00,152.01 755.50,147.38 756.00,142.90 756.50,138.58 757.00,134.45 757.50,130.52 758.00,126.78 758.50,123.26 759.00,119.97 759.50,116.90 760.00,114.08 760.50,111.51 761.00,109.19 761.50,107.14 762.00,105.35 762.50,103.84 763.00,102.61 763.50,101.65 764.00,100.99 764.50,100.60 765.00,100.50 765.50,100.69 766.00,101.17 766.50,101.93 767.00,102.97 767.50,104.30 768.00,105.90 768.50,107.77 769.00,109.91 769.50,112.30 770.00,114.96 770.50,117.86 771.00,121.00 771.50,124.37 772.00,127.95 772.50,131.75 773.00,135.76 773.50,139.94 774.00,144.31 774.50,148.84 775.00,153.53 775.50,158.35 776.00,163.31 776.50,168.37 777.00,173.53 777.50,178.78 778.00,184.10 778.50,189.47 779.00,194.88 779.50,200.32 780.00,205.77 780.50,211.21 781.00,216.64 781.50,222.03 782.00,227.36 782.50,232.64 783.00,237.83 783.50,242.93 784.00,247.93 784.50,252.80 785.00,257.53 785.50,262.12 786.00,266.55 786.50,270.80 787.00,274.87 787.50,278.74 788.00,282.40 788.50,285.85 789.00,289.07 789.50,292.05 790.00,294.80 790.50,297.28 791.00,299.51 791.50,301.48 792.00,303.18 792.50,304.60 793.00,305.74 793.50,306.60 794.00,307.17 794.50,307.46 795.00,307.47 795.50,307.18 796.00,306.61 796.50,305.76 797.00,304.62 797.50,303.21 798.00,301.52 798.50,299.56 799.00,297.33 799.50,294.85 800.00,292.11 800.50,289.13 801.00,285.92 801.50,282.47 802.00,278.81 802.50,274.95 803.00,270.88 803.50,266.63 804.00,262.21 804.50,257.63 805.00,252.89 805.50,248.02 806.00,243.03 806.50,237.94 807.00,232.74 807.50,227.47 808.00,222.13 808.50,216.75 809.00,211.32 809.50,205.88 810.00,200.43 810.50,194.99 811.00,189.58 811.50,184.21 812.00,178.89 812.50,173.64 813.00,168.47 813.50,163.41 814.00,158.45 814.50,153.62 815.00,148.94 815.50,144.40 816.00,140.03 816.50,135.84 817.00,131.83 817.50,128.03 818.00,124.43 818.50,121.06 819.00,117.92 819.50,115.01 820.00,112.36 820.50,109.95 821.00,107.81 821.50,105.93 822.00,104.33 822.50,103.00 823.00,101.95 823.50,101.18 824.00,100.70 824.50,100.50 825.00,100.60 825.50,100.97 826.00,101.64 826.50,102.59 827.00,103.81 827.50,105.32 828.00,107.10 828.50,109.15 829.00,111.46 829.50,114.03 830.00,116.84 830.50,119.90 831.00,123.19 831.50,126.71 832.00,130.44 832.50,134.37 833.00,138.50 833.50,142.81 834.00,147.29 834.50,151.92 835.00,156.70 835.50,161.61 836.00,166.64 836.50,171.77 837.00,176.99 837.50,182.28 838.00,187.64 838.50,193.04 839.00,198.47 839.50,203.92 840.00,209.37 840.50,214.80 841.00,220.20 841.50,225.56 842.00,230.85 842.50,236.08 843.00,241.21 843.50,246.24 844.00,251.16 844.50,255.94 845.00,260.58 845.50,265.06 846.00,269.37 846.50,273.51 847.00,277.45 847.50,281.18 848.00,284.70 848.50,288.00 849.00,291.07 849.50,293.89 850.00,296.47 850.50,298.79 851.00,300.84 851.50,302.63 852.00,304.14 852.50,305.38 853.00,306.34 853.50,307.01 854.00,307.40 854.50,307.50 855.00,307.31 855.50,306.84 856.00,306.08 856.50,305.04 857.00,303.72 857.50,302.12 858.00,300.25 858.50,298.12 859.00,295.72 859.50,293.07 860.00,290.17 860.50,287.04 861.00,283.67 861.50,280.08 862.00,276.28 862.50,272.29 863.00,268.10 863.50,263.73 864.00,259.20 864.50,254.52 865.00,249.69 865.50,244.74 866.00,239.68 866.50,234.52 867.00,229.27 867.50,223.95 868.00,218.58 868.50,213.17 869.00,207.73 869.50,202.28 870.00,196.84 870.50,191.42 871.00,186.03 871.50,180.69 872.00,175.41 872.50,170.22 873.00,165.12 873.50,160.12 874.00,155.25 874.50,150.51 875.00,145.92 875.50,141.50 876.00,137.24 876.50,133.17 877.00,129.30 877.50,125.63 878.00,122.18 878.50,118.96 879.00,115.97 879.50,113.23 880.00,110.74 880.50,108.51 881.00,106.54 881.50,104.84 882.00,103.42 882.50,102.27 883.00,101.41 883.50,100.83 884.00,100.54 884.50,100.53 885.00,100.81 885.50,101.38 886.00,102.23 886.50,103.37 887.00,104.78 887.50,106.47 888.00,108.42 888.50,110.65 889.00,113.13 889.50,115.86 890.00,118.84 890.50,122.05 891.00,125.49 891.50,129.15 892.00,133.01 892.50,137.08 893.00,141.32 893.50,145.74 894.00,150.33 894.50,155.06 895.00,159.93 895.50,164.92 896.00,170.01 896.50,175.20 897.00,180.48 897.50,185.81 898.00,191.20 898.50,196.62 899.00,202.07 899.50,207.51 900.00,212.95 900.50,218.37 901.00,223.74 901.50,229.06 902.00,234.31 902.50,239.48 903.00,244.54 903.50,249.50 904.00,254.33 904.50,259.02 905.00,263.55 905.50,267.93 906.00,272.12 906.50,276.13 907.00,279.93 907.50,283.53 908.00,286.91 908.50,290.05 909.00,292.96 909.50,295.62 910.00,298.03 910.50,300.17 911.00,302.05 911.50,303.66 912.00,304.99 912.50,306.04 913.00,306.81 913.50,307.30 914.00,307.49 914.50,307.41 915.00,307.03 915.50,306.37 916.00,305.42 916.50,304.20 917.00,302.70 917.50,300.92 918.00,298.87 918.50,296.56 919.00,294.00 919.50,291.18 920.00,288.13 920.50,284.84 921.00,281.33 921.50,277.60 922.00,273.67 922.50,269.54 923.00,265.24 923.50,260.76 924.00,256.13 924.50,251.35 925.00,246.44 925.50,241.41 926.00,236.28 926.50,231.06 927.00,225.77 927.50,220.41 928.00,215.01 928.50,209.58 929.00,204.14 929.50,198.69 930.00,193.26 930.50,187.85 931.00,182.50 931.50,177.20 932.00,171.98 932.50,166.84 933.00,161.81 933.50,156.89 934.00,152.11 934.50,147.47 935.00,142.98 935.50,138.67 936.00,134.53 936.50,130.59 937.00,126.86 937.50,123.33 938.00,120.03 938.50,116.96 939.00,114.14 939.50,111.56 940.00,109.24 940.50,107.18 941.00,105.39 941.50,103.87 942.00,102.63 942.50,101.67 943.00,101.00 943.50,100.61 944.00,100.50 944.50,100.69 945.00,101.16 945.50,101.91 946.00,102.95 946.50,104.27 947.00,105.86 947.50,107.73 948.00,109.86 948.50,112.25 949.00,114.90 949.50,117.80 950.00,120.93 950.50,124.30 951.00,127.88 951.50,131.68 952.00,135.67 952.50,139.86 953.00,144.22 953.50,148.75 954.00,153.43 954.50,158.26 955.00,163.21 955.50,168.27 956.00,173.43 956.50,178.68 957.00,183.99 957.50,189.36 958.00,194.78 958.50,200.21 959.00,205.66 959.50,211.11 960.00,216.53 960.50,221.92 961.00,227.26 961.50,232.53 962.00,237.73 962.50,242.83 963.00,247.83 963.50,252.70 964.00,257.44 964.50,262.03 965.00,266.46 965.50,270.72 966.00,274.79 966.50,278.66 967.00,282.33 967.50,285.78 968.00,289.01 968.50,292.00 969.00,294.74 969.50,297.24 970.00,299.47 970.50,301.44 971.00,303.14 971.50,304.57 972.00,305.72 972.50,306.58 973.00,307.16 973.50,307.46 974.00,307.47 974.50,307.19 975.00,306.63 975.50,305.78 976.00,304.65 976.50,303.24 977.00,301.55 977.50,299.60 978.00,297.38 978.50,294.90 979.00,292.17 979.50,289.19 980.00,285.98 980.50,282.55 981.00,278.89 981.50,275.03" fill="none" stroke="#fff" stroke-width="2.6" stroke-linejoin="round" shape-rendering="geometricPrecision"/>
<text x="650" y="362" font-size="12" fill="#000" font-weight="normal" text-anchor="start" textLength="46" lengthAdjust="spacingAndGlyphs">time [ms]</text>
<text x="0" y="0" font-size="12" fill="#000" textLength="52" lengthAdjust="spacingAndGlyphs" transform="translate(315 230.5) rotate(-90)">voltage [V]</text>
<rect x="364" y="401" width="618" height="230" fill="#070b0d"/>
<line x1="365" y1="401.5" x2="982" y2="401.5" stroke="#2a8a40" stroke-width="1"/>
<rect x="357" y="401" width="7" height="1" fill="#000"/>
<text x="354.6" y="405.2" font-size="14.2" fill="#000" font-weight="normal" text-anchor="end">2.5</text>
<line x1="365" y1="446.5" x2="982" y2="446.5" stroke="#2a8a40" stroke-width="1"/>
<rect x="357" y="446" width="7" height="1" fill="#000"/>
<text x="354.6" y="450.2" font-size="14.2" fill="#000" font-weight="normal" text-anchor="end">2</text>
<line x1="365" y1="492.5" x2="982" y2="492.5" stroke="#2a8a40" stroke-width="1"/>
<rect x="357" y="492" width="7" height="1" fill="#000"/>
<text x="354.6" y="496.2" font-size="14.2" fill="#000" font-weight="normal" text-anchor="end">1.5</text>
<line x1="365" y1="539.5" x2="982" y2="539.5" stroke="#2a8a40" stroke-width="1"/>
<rect x="357" y="539" width="7" height="1" fill="#000"/>
<text x="354.6" y="543.2" font-size="14.2" fill="#000" font-weight="normal" text-anchor="end">1</text>
<line x1="365" y1="584.5" x2="982" y2="584.5" stroke="#2a8a40" stroke-width="1"/>
<rect x="357" y="584" width="7" height="1" fill="#000"/>
<text x="354.6" y="588.2" font-size="14.2" fill="#000" font-weight="normal" text-anchor="end">0.5</text>
<rect x="357" y="630" width="7" height="1" fill="#000"/>
<text x="354.6" y="634.2" font-size="14.2" fill="#000" font-weight="normal" text-anchor="end">0</text>
<rect x="364" y="630" width="1" height="7" fill="#000"/>
<line x1="395.5" y1="401" x2="395.5" y2="631" stroke="#2a8a40" stroke-width="1"/>
<rect x="395" y="630" width="1" height="7" fill="#000"/>
<line x1="425.5" y1="401" x2="425.5" y2="631" stroke="#2a8a40" stroke-width="1"/>
<rect x="425" y="630" width="1" height="7" fill="#000"/>
<text x="424.5" y="650" font-size="12" fill="#000" font-weight="normal" text-anchor="middle">1</text>
<line x1="455.5" y1="401" x2="455.5" y2="631" stroke="#2a8a40" stroke-width="1"/>
<rect x="455" y="630" width="1" height="7" fill="#000"/>
<text x="454.5" y="650" font-size="12" fill="#000" font-weight="normal" text-anchor="middle">1</text>
<line x1="485.5" y1="401" x2="485.5" y2="631" stroke="#2a8a40" stroke-width="1"/>
<rect x="485" y="630" width="1" height="7" fill="#000"/>
<text x="484.5" y="650" font-size="12" fill="#000" font-weight="normal" text-anchor="middle">2</text>
<line x1="515.5" y1="401" x2="515.5" y2="631" stroke="#2a8a40" stroke-width="1"/>
<line x1="514.5" y1="401" x2="514.5" y2="631" stroke="#2a8a40" stroke-width="1"/>
<rect x="515" y="630" width="1" height="7" fill="#000"/>
<text x="514.5" y="650" font-size="12" fill="#000" font-weight="normal" text-anchor="middle">2</text>
<line x1="545.5" y1="401" x2="545.5" y2="631" stroke="#2a8a40" stroke-width="1"/>
<rect x="545" y="630" width="1" height="7" fill="#000"/>
<text x="544.5" y="650" font-size="12" fill="#000" font-weight="normal" text-anchor="middle">3</text>
<line x1="575.5" y1="401" x2="575.5" y2="631" stroke="#2a8a40" stroke-width="1"/>
<rect x="575" y="630" width="1" height="7" fill="#000"/>
<text x="574.5" y="650" font-size="12" fill="#000" font-weight="normal" text-anchor="middle">3</text>
<line x1="605.5" y1="401" x2="605.5" y2="631" stroke="#2a8a40" stroke-width="1"/>
<rect x="605" y="630" width="1" height="7" fill="#000"/>
<text x="604.5" y="650" font-size="12" fill="#000" font-weight="normal" text-anchor="middle">4</text>
<line x1="635.5" y1="401" x2="635.5" y2="631" stroke="#2a8a40" stroke-width="1"/>
<rect x="635" y="630" width="1" height="7" fill="#000"/>
<text x="634.5" y="650" font-size="12" fill="#000" font-weight="normal" text-anchor="middle">4</text>
<line x1="666.5" y1="401" x2="666.5" y2="631" stroke="#2a8a40" stroke-width="1"/>
<rect x="666" y="630" width="1" height="7" fill="#000"/>
<text x="665.5" y="650" font-size="12" fill="#000" font-weight="normal" text-anchor="middle">5</text>
<line x1="696.5" y1="401" x2="696.5" y2="631" stroke="#2a8a40" stroke-width="1"/>
<rect x="696" y="630" width="1" height="7" fill="#000"/>
<text x="695.5" y="650" font-size="12" fill="#000" font-weight="normal" text-anchor="middle">5</text>
<line x1="726.5" y1="401" x2="726.5" y2="631" stroke="#2a8a40" stroke-width="1"/>
<rect x="726" y="630" width="1" height="7" fill="#000"/>
<text x="725.5" y="650" font-size="12" fill="#000" font-weight="normal" text-anchor="middle">6</text>
<line x1="756.5" y1="401" x2="756.5" y2="631" stroke="#2a8a40" stroke-width="1"/>
<rect x="756" y="630" width="1" height="7" fill="#000"/>
<text x="755.5" y="650" font-size="12" fill="#000" font-weight="normal" text-anchor="middle">6</text>
<line x1="786.5" y1="401" x2="786.5" y2="631" stroke="#2a8a40" stroke-width="1"/>
<rect x="786" y="630" width="1" height="7" fill="#000"/>
<text x="785.5" y="650" font-size="12" fill="#000" font-weight="normal" text-anchor="middle">7</text>
<line x1="816.5" y1="401" x2="816.5" y2="631" stroke="#2a8a40" stroke-width="1"/>
<rect x="816" y="630" width="1" height="7" fill="#000"/>
<text x="815.5" y="650" font-size="12" fill="#000" font-weight="normal" text-anchor="middle">7</text>
<line x1="846.5" y1="401" x2="846.5" y2="631" stroke="#2a8a40" stroke-width="1"/>
<rect x="846" y="630" width="1" height="7" fill="#000"/>
<text x="845.5" y="650" font-size="12" fill="#000" font-weight="normal" text-anchor="middle">8</text>
<line x1="876.5" y1="401" x2="876.5" y2="631" stroke="#2a8a40" stroke-width="1"/>
<rect x="876" y="630" width="1" height="7" fill="#000"/>
<text x="875.5" y="650" font-size="12" fill="#000" font-weight="normal" text-anchor="middle">8</text>
<line x1="906.5" y1="401" x2="906.5" y2="631" stroke="#2a8a40" stroke-width="1"/>
<rect x="906" y="630" width="1" height="7" fill="#000"/>
<text x="905.5" y="650" font-size="12" fill="#000" font-weight="normal" text-anchor="middle">9</text>
<line x1="936.5" y1="401" x2="936.5" y2="631" stroke="#2a8a40" stroke-width="1"/>
<rect x="936" y="630" width="1" height="7" fill="#000"/>
<text x="935.5" y="650" font-size="12" fill="#000" font-weight="normal" text-anchor="middle">9</text>
<line x1="967.5" y1="401" x2="967.5" y2="631" stroke="#2a8a40" stroke-width="1"/>
<rect x="967" y="630" width="1" height="7" fill="#000"/>
<text x="966.5" y="650" font-size="12" fill="#000" font-weight="normal" text-anchor="middle">10</text>
<clipPath id="c401"><rect x="364" y="401" width="618" height="230"/></clipPath>
<polyline clip-path="url(#c401)" points="365.00,553.63 365.50,550.14 366.00,546.28 366.50,542.09 367.00,537.62 367.50,532.91 368.00,528.02 368.50,522.99 369.00,517.90 369.50,512.79 370.00,507.72 370.50,502.74 371.00,497.92 371.50,493.30 372.00,488.94 372.50,484.88 373.00,481.18 373.50,477.86 374.00,474.97 374.50,472.54 375.00,470.60 375.50,469.17 376.00,468.26 376.50,467.88 377.00,468.04 377.50,468.74 378.00,469.96 378.50,471.71 379.00,473.94 379.50,476.65 380.00,479.80 380.50,483.36 381.00,487.28 381.50,491.52 382.00,496.05 382.50,500.79 383.00,505.71 383.50,510.75 384.00,515.85 384.50,520.96 385.00,526.02 385.50,530.97 386.00,535.76 386.50,540.33 387.00,544.64 387.50,548.64 388.00,552.28 388.50,555.52 389.00,558.33 389.50,560.67 390.00,562.53 390.50,563.87 391.00,564.68 391.50,564.96 392.00,564.71 392.50,563.91 393.00,562.59 393.50,560.76 394.00,558.43 394.50,555.64 395.00,552.42 395.50,548.79 396.00,544.81 396.50,540.51 397.00,535.95 397.50,531.16 398.00,526.22 398.50,521.16 399.00,516.06 399.50,510.95 400.00,505.91 400.50,500.99 401.00,496.23 401.50,491.70 402.00,487.44 402.50,483.51 403.00,479.94 403.50,476.77 404.00,474.04 404.50,471.79 405.00,470.02 405.50,468.78 406.00,468.06 406.50,467.87 407.00,468.23 407.50,469.12 408.00,470.53 408.50,472.46 409.00,474.87 409.50,477.74 410.00,481.04 410.50,484.73 411.00,488.77 411.50,493.12 412.00,497.73 412.50,502.55 413.00,507.52 413.50,512.58 414.00,517.69 414.50,522.79 415.00,527.82 415.50,532.72 416.00,537.43 416.50,541.92 417.00,546.12 417.50,550.00 418.00,553.50 418.50,556.59 419.00,559.23 419.50,561.40 420.00,563.07 420.50,564.22 421.00,564.85 421.50,564.93 422.00,564.48 422.50,563.50 423.00,561.99 423.50,559.98 424.00,557.48 424.50,554.53 425.00,551.16 425.50,547.40 426.00,543.30 426.50,538.90 427.00,534.25 427.50,529.40 428.00,524.41 428.50,519.33 429.00,514.22 429.50,509.13 430.00,504.12 430.50,499.25 431.00,494.57 431.50,490.13 432.00,485.99 432.50,482.18 433.00,478.75 433.50,475.74 434.00,473.18 434.50,471.09 435.00,469.52 435.50,468.46 436.00,467.93 436.50,467.94 437.00,468.49 437.50,469.57 438.00,471.17 438.50,473.27 439.00,475.85 439.50,478.88 440.00,482.32 440.50,486.15 441.00,490.31 441.50,494.75 442.00,499.44 442.50,504.32 443.00,509.33 443.50,514.42 444.00,519.53 444.50,524.61 445.00,529.60 445.50,534.44 446.00,539.08 446.50,543.47 447.00,547.56 447.50,551.30 448.00,554.66 448.50,557.59 449.00,560.07 449.50,562.06 450.00,563.55 450.50,564.51 451.00,564.94 451.50,564.83 452.00,564.19 452.50,563.01 453.00,561.32 453.50,559.13 454.00,556.47 454.50,553.36 455.00,549.85 455.50,545.96 456.00,541.75 456.50,537.25 457.00,532.52 457.50,527.62 458.00,522.59 458.50,517.49 459.00,512.38 459.50,507.31 460.00,502.35 460.50,497.54 461.00,492.94 461.50,488.60 462.00,484.57 462.50,480.90 463.00,477.61 463.50,474.76 464.00,472.37 464.50,470.47 465.00,469.07 465.50,468.21 466.00,467.87 466.50,468.08 467.00,468.82 467.50,470.09 468.00,471.87 468.50,474.14 469.00,476.89 469.50,480.07 470.00,483.66 470.50,487.61 471.00,491.88 471.50,496.42 472.00,501.18 472.50,506.11 473.00,511.16 473.50,516.26 474.00,521.37 474.50,526.42 475.00,531.36 475.50,536.13 476.00,540.69 476.50,544.98 477.00,548.95 477.50,552.56 478.00,555.76 478.50,558.54 479.00,560.84 479.50,562.65 480.00,563.95 480.50,564.73 481.00,564.96 481.50,564.66 482.00,563.83 482.50,562.46 483.00,560.59 483.50,558.23 484.00,555.40 484.50,552.14 485.00,548.49 485.50,544.48 486.00,540.16 486.50,535.57 487.00,530.77 487.50,525.82 488.00,520.76 488.50,515.65 489.00,510.55 489.50,505.51 490.00,500.60 490.50,495.86 491.00,491.35 491.50,487.12 492.00,483.21 492.50,479.67 493.00,476.54 493.50,473.85 494.00,471.63 494.50,469.91 495.00,468.70 495.50,468.02 496.00,467.88 496.50,468.28 497.00,469.21 497.50,470.67 498.00,472.63 498.50,475.08 499.00,477.99 499.50,481.32 500.00,485.04 500.50,489.11 501.00,493.48 501.50,498.11 502.00,502.94 502.50,507.92 503.00,512.99 503.50,518.10 504.00,523.20 504.50,528.21 505.00,533.10 505.50,537.80 506.00,542.27 506.50,546.44 507.00,550.29 507.50,553.76 508.00,556.81 508.50,559.42 509.00,561.55 509.50,563.18 510.00,564.29 510.50,564.87 511.00,564.92 511.50,564.42 512.00,563.39 512.50,561.85 513.00,559.79 513.50,557.26 514.00,554.28 514.50,550.87 515.00,547.08 515.50,542.96 516.00,538.53 516.50,533.87 517.00,529.01 517.50,524.01 518.00,518.92 518.50,513.81 519.00,508.73 519.50,503.73 520.00,498.87 520.50,494.21 521.00,489.79 521.50,485.67 522.00,481.89 522.50,478.49 523.00,475.51 523.50,472.99 524.00,470.95 524.50,469.41 525.00,468.40 525.50,467.91 526.00,467.96 526.50,468.56 527.00,469.68 527.50,471.32 528.00,473.46 528.50,476.07 529.00,479.14 529.50,482.62 530.00,486.47 530.50,490.65 531.00,495.12 531.50,499.83 532.00,504.72 532.50,509.74 533.00,514.83 533.50,519.94 534.00,525.01 534.50,529.99 535.00,534.82 535.50,539.44 536.00,543.81 536.50,547.87 537.00,551.58 537.50,554.91 538.00,557.81 538.50,560.24 539.00,562.20 539.50,563.64 540.00,564.56 540.50,564.95 541.00,564.80 541.50,564.11 542.00,562.90 542.50,561.17 543.00,558.94 543.50,556.24 544.00,553.10 544.50,549.55 545.00,545.63 545.50,541.40 546.00,536.88 546.50,532.14 547.00,527.22 547.50,522.18 548.00,517.08 548.50,511.97 549.00,506.91 549.50,501.96 550.00,497.17 550.50,492.59 551.00,488.27 551.50,484.27 552.00,480.62 552.50,477.37 553.00,474.55 553.50,472.20 554.00,470.34 554.50,468.98 555.00,468.16 555.50,467.87 556.00,468.12 556.50,468.90 557.00,470.21 557.50,472.03 558.00,474.35 558.50,477.13 559.00,480.34 559.50,483.96 560.00,487.94 560.50,492.23 561.00,496.79 561.50,501.57 562.00,506.51 562.50,511.57 563.00,516.67 563.50,521.78 564.00,526.82 564.50,531.75 565.00,536.51 565.50,541.04 566.00,545.31 566.50,549.25 567.00,552.83 567.50,556.00 568.00,558.74 568.50,561.00 569.00,562.78 569.50,564.03 570.00,564.76 570.50,564.96 571.00,564.61 571.50,563.74 572.00,562.33 572.50,560.42 573.00,558.02 573.50,555.16 574.00,551.86 574.50,548.18 575.00,544.14 575.50,539.80 576.00,535.20 576.50,530.38 577.00,525.42 577.50,520.35 578.00,515.24 578.50,510.14 579.00,505.12 579.50,500.21 580.00,495.49 580.50,491.00 581.00,486.79 581.50,482.91 582.00,479.40 582.50,476.30 583.00,473.65 583.50,471.47 584.00,469.79 584.50,468.63 585.00,467.99 585.50,467.90 586.00,468.34 586.50,469.31 587.00,470.81 587.50,472.81 588.00,475.30 588.50,478.24 589.00,481.60 589.50,485.35 590.00,489.45 590.50,493.84 591.00,498.49 591.50,503.33 592.00,508.32 592.50,513.40 593.00,518.51 593.50,523.60 594.00,528.61 594.50,533.48 595.00,538.17 595.50,542.61 596.00,546.77 596.50,550.58 597.00,554.02 597.50,557.04 598.00,559.61 598.50,561.70 599.00,563.29 599.50,564.36 600.00,564.90 600.50,564.90 601.00,564.36 601.50,563.29 602.00,561.70 602.50,559.61 603.00,557.04 603.50,554.02 604.00,550.58 604.50,546.77 605.00,542.61 605.50,538.17 606.00,533.48 606.50,528.61 607.00,523.60 607.50,518.51 608.00,513.40 608.50,508.32 609.00,503.33 609.50,498.49 610.00,493.84 610.50,489.45 611.00,485.35 611.50,481.60 612.00,478.24 612.50,475.30 613.00,472.81 613.50,470.81 614.00,469.31 614.50,468.34 615.00,467.90 615.50,467.99 616.00,468.63 616.50,469.79 617.00,471.47 617.50,473.65 618.00,476.30 618.50,479.40 619.00,482.91 619.50,486.79 620.00,491.00 620.50,495.49 621.00,500.21 621.50,505.12 622.00,510.14 622.50,515.24 623.00,520.35 623.50,525.42 624.00,530.38 624.50,535.20 625.00,539.80 625.50,544.14 626.00,548.18 626.50,551.86 627.00,555.16 627.50,558.02 628.00,560.42 628.50,562.33 629.00,563.74 629.50,564.61 630.00,564.96 630.50,564.76 631.00,564.03 631.50,562.78 632.00,561.00 632.50,558.74 633.00,556.00 633.50,552.83 634.00,549.25 634.50,545.31 635.00,541.04 635.50,536.51 636.00,531.75 636.50,526.82 637.00,521.78 637.50,516.67 638.00,511.57 638.50,506.51 639.00,501.57 639.50,496.79 640.00,492.23 640.50,487.94 641.00,483.96 641.50,480.34 642.00,477.13 642.50,474.35 643.00,472.03 643.50,470.21 644.00,468.90 644.50,468.12 645.00,467.87 645.50,468.16 646.00,468.98 646.50,470.34 647.00,472.20 647.50,474.55 648.00,477.37 648.50,480.62 649.00,484.27 649.50,488.27 650.00,492.59 650.50,497.17 651.00,501.96 651.50,506.91 652.00,511.97 652.50,517.08 653.00,522.18 653.50,527.22 654.00,532.14 654.50,536.88 655.00,541.40 655.50,545.63 656.00,549.55 656.50,553.10 657.00,556.24 657.50,558.94 658.00,561.17 658.50,562.90 659.00,564.11 659.50,564.80 660.00,564.95 660.50,564.56 661.00,563.64 661.50,562.20 662.00,560.24 662.50,557.81 663.00,554.91 663.50,551.58 664.00,547.87 664.50,543.81 665.00,539.44 665.50,534.82 666.00,529.99 666.50,525.01 667.00,519.94 667.50,514.83 668.00,509.74 668.50,504.72 669.00,499.83 669.50,495.12 670.00,490.65 670.50,486.47 671.00,482.62 671.50,479.14 672.00,476.07 672.50,473.46 673.00,471.32 673.50,469.68 674.00,468.56 674.50,467.96 675.00,467.91 675.50,468.40 676.00,469.41 676.50,470.95 677.00,472.99 677.50,475.51 678.00,478.49 678.50,481.89 679.00,485.67 679.50,489.79 680.00,494.21 680.50,498.87 681.00,503.73 681.50,508.73 682.00,513.81 682.50,518.92 683.00,524.01 683.50,529.01 684.00,533.87 684.50,538.53 685.00,542.96 685.50,547.08 686.00,550.87 686.50,554.28 687.00,557.26 687.50,559.79 688.00,561.85 688.50,563.39 689.00,564.42 689.50,564.92 690.00,564.87 690.50,564.29 691.00,563.18 691.50,561.55 692.00,559.42 692.50,556.81 693.00,553.76 693.50,550.29 694.00,546.44 694.50,542.27 695.00,537.80 695.50,533.10 696.00,528.21 696.50,523.20 697.00,518.10 697.50,512.99 698.00,507.92 698.50,502.94 699.00,498.11 699.50,493.48 700.00,489.11 700.50,485.04 701.00,481.32 701.50,477.99 702.00,475.08 702.50,472.63 703.00,470.67 703.50,469.21 704.00,468.28 704.50,467.88 705.00,468.02 705.50,468.70 706.00,469.91 706.50,471.63 707.00,473.85 707.50,476.54 708.00,479.67 708.50,483.21 709.00,487.12 709.50,491.35 710.00,495.86 710.50,500.60 711.00,505.51 711.50,510.55 712.00,515.65 712.50,520.76 713.00,525.82 713.50,530.77 714.00,535.57 714.50,540.16 715.00,544.48 715.50,548.49 716.00,552.14 716.50,555.40 717.00,558.23 717.50,560.59 718.00,562.46 718.50,563.83 719.00,564.66 719.50,564.96 720.00,564.73 720.50,563.95 721.00,562.65 721.50,560.84 722.00,558.54 722.50,555.76 723.00,552.56 723.50,548.95 724.00,544.98 724.50,540.69 725.00,536.13 725.50,531.36 726.00,526.42 726.50,521.37 727.00,516.26 727.50,511.16 728.00,506.11 728.50,501.18 729.00,496.42 729.50,491.88 730.00,487.61 730.50,483.66 731.00,480.07 731.50,476.89 732.00,474.14 732.50,471.87 733.00,470.09 733.50,468.82 734.00,468.08 734.50,467.87 735.00,468.21 735.50,469.07 736.00,470.47 736.50,472.37 737.00,474.76 737.50,477.61 738.00,480.90 738.50,484.57 739.00,488.60 739.50,492.94 740.00,497.54 740.50,502.35 741.00,507.31 741.50,512.38 742.00,517.49 742.50,522.59 743.00,527.62 743.50,532.52 744.00,537.25 744.50,541.75 745.00,545.96 745.50,549.85 746.00,553.36 746.50,556.47 747.00,559.13 747.50,561.32 748.00,563.01 748.50,564.19 749.00,564.83 749.50,564.94 750.00,564.51 750.50,563.55 751.00,562.06 751.50,560.07 752.00,557.59 752.50,554.66 753.00,551.30 753.50,547.56 754.00,543.47 754.50,539.08 755.00,534.44 755.50,529.60 756.00,524.61 756.50,519.53 757.00,514.42 757.50,509.33 758.00,504.32 758.50,499.44 759.00,494.75 759.50,490.31 760.00,486.15 760.50,482.32 761.00,478.88 761.50,475.85 762.00,473.27 762.50,471.17 763.00,469.57 763.50,468.49 764.00,467.94 764.50,467.93 765.00,468.46 765.50,469.52 766.00,471.09 766.50,473.18 767.00,475.74 767.50,478.75 768.00,482.18 768.50,485.99 769.00,490.13 769.50,494.57 770.00,499.25 770.50,504.12 771.00,509.13 771.50,514.22 772.00,519.33 772.50,524.41 773.00,529.40 773.50,534.25 774.00,538.90 774.50,543.30 775.00,547.40 775.50,551.16 776.00,554.53 776.50,557.48 777.00,559.98 777.50,561.99 778.00,563.50 778.50,564.48 779.00,564.93 779.50,564.85 780.00,564.22 780.50,563.07 781.00,561.40 781.50,559.23 782.00,556.59 782.50,553.50 783.00,550.00 783.50,546.12 784.00,541.92 784.50,537.43 785.00,532.72 785.50,527.82 786.00,522.79 786.50,517.69 787.00,512.58 787.50,507.52 788.00,502.55 788.50,497.73 789.00,493.12 789.50,488.77 790.00,484.73 790.50,481.04 791.00,477.74 791.50,474.87 792.00,472.46 792.50,470.53 793.00,469.12 793.50,468.23 794.00,467.87 794.50,468.06 795.00,468.78 795.50,470.02 796.00,471.79 796.50,474.04 797.00,476.77 797.50,479.94 798.00,483.51 798.50,487.44 799.00,491.70 799.50,496.23 800.00,500.99 800.50,505.91 801.00,510.95 801.50,516.06 802.00,521.16 802.50,526.22 803.00,531.16 803.50,535.95 804.00,540.51 804.50,544.81 805.00,548.79 805.50,552.42 806.00,555.64 806.50,558.43 807.00,560.76 807.50,562.59 808.00,563.91 808.50,564.71 809.00,564.96 809.50,564.68 810.00,563.87 810.50,562.53 811.00,560.67 811.50,558.33 812.00,555.52 812.50,552.28 813.00,548.64 813.50,544.64 814.00,540.33 814.50,535.76 815.00,530.97 815.50,526.02 816.00,520.96 816.50,515.85 817.00,510.75 817.50,505.71 818.00,500.79 818.50,496.05 819.00,491.52 819.50,487.28 820.00,483.36 820.50,479.80 821.00,476.65 821.50,473.94 822.00,471.71 822.50,469.96 823.00,468.74 823.50,468.04 824.00,467.88 824.50,468.26 825.00,469.17 825.50,470.60 826.00,472.54 826.50,474.97 827.00,477.86 827.50,481.18 828.00,484.88 828.50,488.94 829.00,493.30 829.50,497.92 830.00,502.74 830.50,507.72 831.00,512.79 831.50,517.90 832.00,522.99 832.50,528.02 833.00,532.91 833.50,537.62 834.00,542.09 834.50,546.28 835.00,550.14 835.50,553.63 836.00,556.70 836.50,559.33 837.00,561.48 837.50,563.13 838.00,564.26 838.50,564.86 839.00,564.93 839.50,564.45 840.00,563.45 840.50,561.92 841.00,559.89 841.50,557.37 842.00,554.40 842.50,551.01 843.00,547.24 843.50,543.13 844.00,538.72 844.50,534.06 845.00,529.20 845.50,524.21 846.00,519.13 846.50,514.01 847.00,508.93 847.50,503.92 848.00,499.06 848.50,494.39 849.00,489.96 849.50,485.83 850.00,482.03 850.50,478.62 851.00,475.63 851.50,473.08 852.00,471.02 852.50,469.46 853.00,468.43 853.50,467.92 854.00,467.95 854.50,468.52 855.00,469.62 855.50,471.24 856.00,473.36 856.50,475.96 857.00,479.01 857.50,482.47 858.00,486.31 858.50,490.48 859.00,494.94 859.50,499.64 860.00,504.52 860.50,509.53 861.00,514.63 861.50,519.74 862.00,524.81 862.50,529.79 863.00,534.63 863.50,539.26 864.00,543.64 864.50,547.71 865.00,551.44 865.50,554.78 866.00,557.70 866.50,560.16 867.00,562.13 867.50,563.59 868.00,564.54 868.50,564.95 869.00,564.82 869.50,564.15 870.00,562.96 870.50,561.24 871.00,559.04 871.50,556.35 872.00,553.23 872.50,549.70 873.00,545.80 873.50,541.57 874.00,537.06 874.50,532.33 875.00,527.42 875.50,522.38 876.00,517.29 876.50,512.18 877.00,507.11 877.50,502.16 878.00,497.35 878.50,492.76 879.00,488.44 879.50,484.42 880.00,480.76 880.50,477.49 881.00,474.66 881.50,472.28 882.00,470.40 882.50,469.03 883.00,468.18 883.50,467.87 884.00,468.10 884.50,468.86 885.00,470.15 885.50,471.95 886.00,474.24 886.50,477.01 887.00,480.21 887.50,483.81 888.00,487.77 888.50,492.05 889.00,496.60 889.50,501.37 890.00,506.31 890.50,511.36 891.00,516.47 891.50,521.57 892.00,526.62 892.50,531.55 893.00,536.32 893.50,540.87 894.00,545.14 894.50,549.10 895.00,552.69 895.50,555.88 896.00,558.64 896.50,560.92 897.00,562.72 897.50,563.99 898.00,564.75 898.50,564.96 899.00,564.64 899.50,563.78 900.00,562.40 900.50,560.51 901.00,558.12 901.50,555.28 902.00,552.00 902.50,548.33 903.00,544.31 903.50,539.98 904.00,535.38 904.50,530.58 905.00,525.62 905.50,520.55 906.00,515.44 906.50,510.35 907.00,505.31 907.50,500.41 908.00,495.67 908.50,491.17 909.00,486.95 909.50,483.06 910.00,479.53 910.50,476.42 911.00,473.75 911.50,471.55 912.00,469.85 912.50,468.66 913.00,468.01 913.50,467.89 914.00,468.31 914.50,469.26 915.00,470.74 915.50,472.72 916.00,475.19 916.50,478.11 917.00,481.46 917.50,485.20 918.00,489.28 918.50,493.66 919.00,498.30 919.50,503.14 920.00,508.12 920.50,513.20 921.00,518.31 921.50,523.40 922.00,528.41 922.50,533.29 923.00,537.99 923.50,542.44 924.00,546.61 924.50,550.44 925.00,553.89 925.50,556.93 926.00,559.52 926.50,561.63 927.00,563.24 927.50,564.33 928.00,564.89 928.50,564.91 929.00,564.39 929.50,563.34 930.00,561.77 930.50,559.70 931.00,557.15 931.50,554.15 932.00,550.73 932.50,546.92 933.00,542.78 933.50,538.35 934.00,533.68 934.50,528.81 935.00,523.80 935.50,518.72 936.00,513.60 936.50,508.52 937.00,503.53 937.50,498.68 938.00,494.03 938.50,489.62 939.00,485.51 939.50,481.75 940.00,478.36 940.50,475.40 941.00,472.90 941.50,470.88 942.00,469.36 942.50,468.37 943.00,467.90 943.50,467.98 944.00,468.59 944.50,469.73 945.00,471.39 945.50,473.55 946.00,476.19 946.50,479.27 947.00,482.76 947.50,486.63 948.00,490.83 948.50,495.31 949.00,500.02 949.50,504.92 950.00,509.94 950.50,515.04 951.00,520.15 951.50,525.22 952.00,530.19 952.50,535.01 953.00,539.62 953.50,543.97 954.00,548.03 954.50,551.72 955.00,555.03 955.50,557.91 956.00,560.33 956.50,562.26 957.00,563.69 957.50,564.59 958.00,564.96 958.50,564.78 959.00,564.07 959.50,562.84 960.00,561.09 960.50,558.84 961.00,556.12 961.50,552.96 962.00,549.40 962.50,545.47 963.00,541.22 963.50,536.69 964.00,531.94 964.50,527.02 965.00,521.98 965.50,516.88 966.00,511.77 966.50,506.71 967.00,501.76 967.50,496.98 968.00,492.41 968.50,488.10 969.00,484.11 969.50,480.48 970.00,477.25 970.50,474.45 971.00,472.12 971.50,470.27 972.00,468.94 972.50,468.14 973.00,467.87 973.50,468.14 974.00,468.94 974.50,470.27 975.00,472.12 975.50,474.45 976.00,477.25 976.50,480.48 977.00,484.11 977.50,488.10 978.00,492.41 978.50,496.98 979.00,501.76 979.50,506.71 980.00,511.77 980.50,516.88 981.00,521.98 981.50,527.02" fill="none" stroke="#fff" stroke-width="2.6" stroke-linejoin="round" shape-rendering="geometricPrecision"/>
<text x="650" y="675" font-size="12" fill="#000" font-weight="normal" text-anchor="start" textLength="46" lengthAdjust="spacingAndGlyphs">time [ms]</text>
<text x="0" y="0" font-size="12" fill="#000" textLength="52" lengthAdjust="spacingAndGlyphs" transform="translate(315 541.5) rotate(-90)">voltage [V]</text>
<rect x="830" y="698" width="195" height="26" fill="#fff" fill-opacity="0.35"/>
<text x="845.5" y="719" font-size="18.5" fill="#5cb04a" fill-opacity="0.47" stroke="#5cb04a" stroke-opacity="0.47" stroke-width="0.6" paint-order="stroke" textLength="165" lengthAdjust="spacingAndGlyphs">www.cntronics.com</text>
</svg>
</body></html>
